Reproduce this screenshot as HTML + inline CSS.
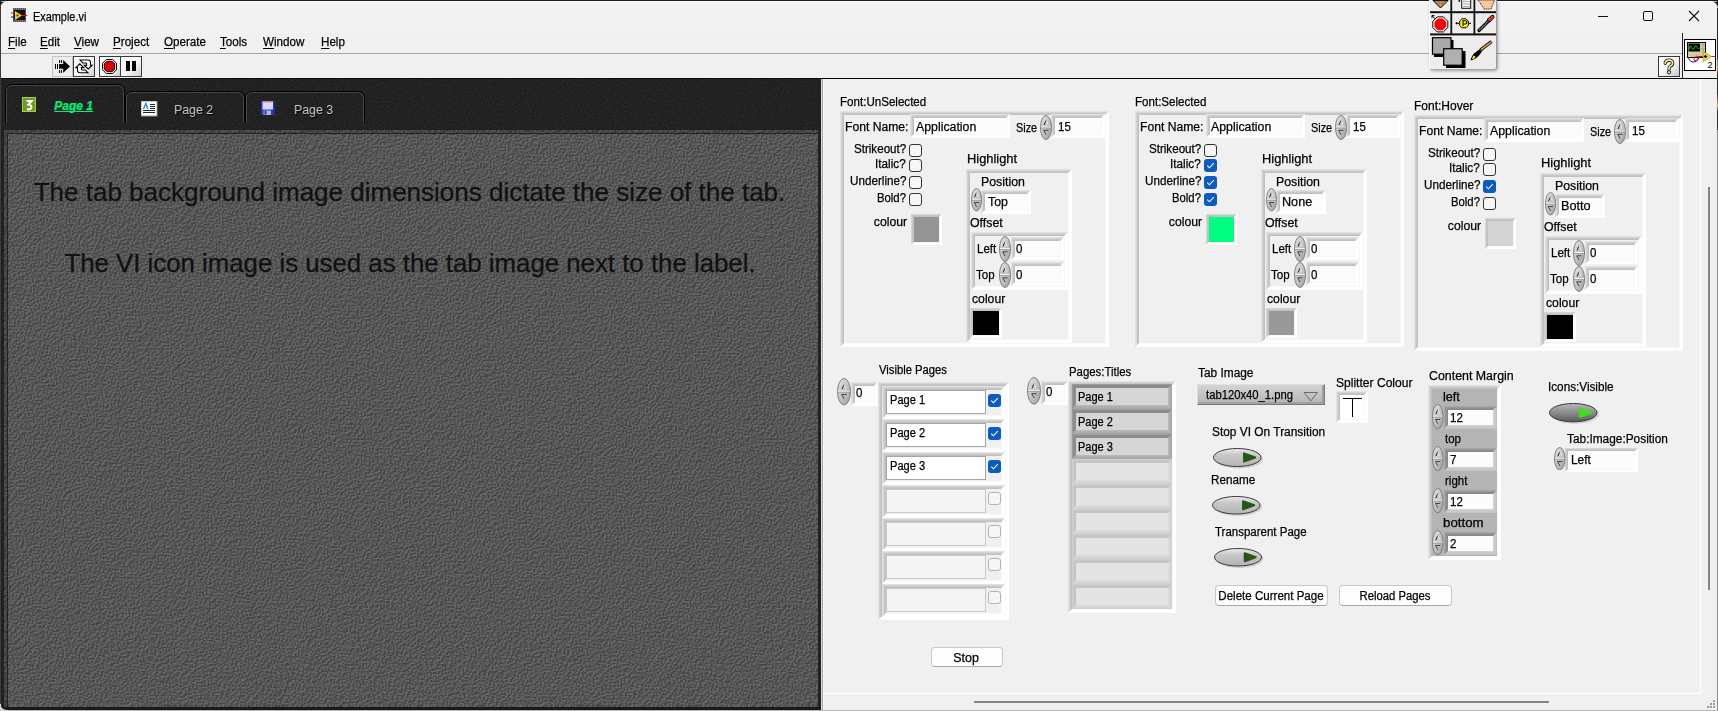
<!DOCTYPE html><html><head><meta charset="utf-8"><style>
html,body{margin:0;padding:0;width:1718px;height:711px;overflow:hidden;background:#1c1c1c;font-family:"Liberation Sans",sans-serif}
.t{position:absolute;white-space:nowrap;line-height:1;font-family:"Liberation Sans",sans-serif;-webkit-text-stroke:0.25px currentColor}
</style></head><body>
<svg width="0" height="0" style="position:absolute">
<defs>
<filter id="nz" x="0" y="0" width="100%" height="100%" color-interpolation-filters="sRGB">
<feTurbulence type="fractalNoise" baseFrequency="0.62" numOctaves="2" seed="7" result="n"/>
<feColorMatrix in="n" type="matrix" values="1 0 0 0 0  1 0 0 0 0  1 0 0 0 0  0 0 0 0 1" result="g"/>
<feConvolveMatrix in="g" order="3" kernelMatrix="2 1 0  1 0 -1  0 -1 -2" divisor="1" bias="0.5" preserveAlpha="true" result="e"/>
<feColorMatrix in="e" type="matrix" values="0.125 0 0 0 0.275  0.125 0 0 0 0.275  0.125 0 0 0 0.275  0 0 0 0 1"/>
</filter>
<filter id="nzd" x="0" y="0" width="100%" height="100%" color-interpolation-filters="sRGB">
<feTurbulence type="fractalNoise" baseFrequency="0.9" numOctaves="2" seed="5"/>
<feColorMatrix type="matrix" values="0.13 0 0 0 0.068  0.13 0 0 0 0.068  0.13 0 0 0 0.068  0 0 0 0 1"/>
</filter>
</defs></svg>

<div style="position:absolute;left:0px;top:1px;width:1718px;height:710px;background:#f0f0f0;border-radius:8px 8px 6px 6px;overflow:hidden"></div>
<div style="position:absolute;left:1px;top:1px;width:1716px;height:32px;background:#f3f3f3;border-radius:8px 8px 0 0"></div>
<div style="position:absolute;left:1px;top:1px;width:1716px;height:1px;background:rgba(255,255,255,0.7);border-radius:8px 8px 0 0"></div>
<div style="position:absolute;left:1px;top:33px;width:1716px;height:20px;background:#f0f0f0"></div>
<div style="position:absolute;left:1px;top:53px;width:1681px;height:1px;background:#a4a4a4"></div>
<div style="position:absolute;left:1px;top:54px;width:1716px;height:24px;background:#f0f0f0"></div>
<div style="position:absolute;left:1682px;top:33px;width:1px;height:45px;background:#222"></div>
<div style="position:absolute;left:1px;top:78px;width:1716px;height:1px;background:#0a0a0a"></div>
<div style="position:absolute;left:0px;top:6px;width:1px;height:698px;background:#3c3c3c"></div>
<svg width="16" height="16" style="position:absolute;left:11px;top:7px" viewBox="0 0 16 16">
<rect x="2" y="1" width="13" height="14" fill="#555"/>
<rect x="3" y="3" width="11" height="10" fill="#111"/>
<g fill="#bbb"><rect x="3" y="1.6" width="1" height="0.8"/><rect x="5" y="1.6" width="1" height="0.8"/><rect x="7" y="1.6" width="1" height="0.8"/><rect x="9" y="1.6" width="1" height="0.8"/><rect x="11" y="1.6" width="1" height="0.8"/><rect x="13" y="1.6" width="1" height="0.8"/>
<rect x="3" y="13.6" width="1" height="0.8"/><rect x="5" y="13.6" width="1" height="0.8"/><rect x="7" y="13.6" width="1" height="0.8"/><rect x="9" y="13.6" width="1" height="0.8"/><rect x="11" y="13.6" width="1" height="0.8"/><rect x="13" y="13.6" width="1" height="0.8"/></g>
<path d="M4 4 L11 8.5 L4 13 Z" fill="#f2d21b"/>
<path d="M0 6 L4 6" stroke="#e00" stroke-width="1"/><path d="M0 10 L4 10" stroke="#00e" stroke-width="1"/><path d="M11 8.5 L16 8.5" stroke="#e00" stroke-width="1"/>
<circle cx="6.5" cy="8.5" r="1" fill="#222"/>
</svg>
<div class="t" style="left:32.70px;top:10.78px;font-size:12.5px;color:#000;transform:scaleX(0.8720);transform-origin:0 0;">Example.vi</div>
<div style="position:absolute;left:1598px;top:16px;width:10px;height:1px;background:#111"></div>
<div style="position:absolute;left:1643px;top:11px;width:8px;height:8px;border:1px solid #111;border-radius:2px"></div>
<svg width="12" height="12" style="position:absolute;left:1688px;top:10px"><path d="M1 1 L11 11 M11 1 L1 11" stroke="#111" stroke-width="1.1"/></svg>
<div class="t" style="left:8.20px;top:35.88px;font-size:12.5px;color:#000;transform:scaleX(0.9300);transform-origin:0 0;"><u style="text-decoration-thickness:1px;text-underline-offset:1.5px">F</u>ile</div>
<div class="t" style="left:40.10px;top:35.88px;font-size:12.5px;color:#000;transform:scaleX(0.9300);transform-origin:0 0;"><u style="text-decoration-thickness:1px;text-underline-offset:1.5px">E</u>dit</div>
<div class="t" style="left:74.00px;top:35.88px;font-size:12.5px;color:#000;transform:scaleX(0.9300);transform-origin:0 0;"><u style="text-decoration-thickness:1px;text-underline-offset:1.5px">V</u>iew</div>
<div class="t" style="left:113.00px;top:35.88px;font-size:12.5px;color:#000;transform:scaleX(0.9300);transform-origin:0 0;"><u style="text-decoration-thickness:1px;text-underline-offset:1.5px">P</u>roject</div>
<div class="t" style="left:164.00px;top:35.88px;font-size:12.5px;color:#000;transform:scaleX(0.9300);transform-origin:0 0;"><u style="text-decoration-thickness:1px;text-underline-offset:1.5px">O</u>perate</div>
<div class="t" style="left:220.30px;top:35.88px;font-size:12.5px;color:#000;transform:scaleX(0.9300);transform-origin:0 0;"><u style="text-decoration-thickness:1px;text-underline-offset:1.5px">T</u>ools</div>
<div class="t" style="left:262.80px;top:35.88px;font-size:12.5px;color:#000;transform:scaleX(0.9300);transform-origin:0 0;"><u style="text-decoration-thickness:1px;text-underline-offset:1.5px">W</u>indow</div>
<div class="t" style="left:321.00px;top:35.88px;font-size:12.5px;color:#000;transform:scaleX(0.9300);transform-origin:0 0;"><u style="text-decoration-thickness:1px;text-underline-offset:1.5px">H</u>elp</div>
<div style="position:absolute;left:52px;top:56px;width:21px;height:21px;background:#ededed;border:1px solid #c4c4c4;box-sizing:border-box"></div>
<svg width="22" height="22" style="position:absolute;left:52px;top:56px" viewBox="52 56 22 22">
<path d="M59.1 64.1 H63.2 V60 L70 66.4 L63.2 72.8 V68.7 H59.1 Z" fill="#000"/>
<path d="M55.5 64 V69 M57.5 64 V69 M59.6 60 V63 M61.6 60 V63 M59.6 70 V73 M61.6 70 V73" stroke="#000" stroke-width="1"/>
</svg>
<div style="position:absolute;left:73px;top:56px;width:22px;height:21px;background:linear-gradient(135deg,#fff 0%,#f6f6f6 55%,#cfcfcf 100%);border:1px solid #3a3a3a;box-sizing:border-box"></div>
<svg width="22" height="22" style="position:absolute;left:73px;top:56px" viewBox="73 56 22 22">
<g id="ua"><path d="M80 60 L88 60 Q90.5 60 90.5 62.5 L90.5 65.2 L92.2 65.2 L88.2 69 L84.2 65.2 L86.6 65.2 L86.6 63.6 Q86.6 62.9 85.9 62.9 L82.9 62.9 Z" fill="#fff" stroke="#000" stroke-width="1.05" stroke-linejoin="miter"/></g>
<g transform="rotate(180 84 66.4)"><path d="M80 60 L88 60 Q90.5 60 90.5 62.5 L90.5 65.2 L92.2 65.2 L88.2 69 L84.2 65.2 L86.6 65.2 L86.6 63.6 Q86.6 62.9 85.9 62.9 L82.9 62.9 Z" fill="#fff" stroke="#000" stroke-width="1.05"/></g>
</svg>
<div style="position:absolute;left:99px;top:56px;width:22px;height:21px;background:linear-gradient(135deg,#fff 0%,#f6f6f6 55%,#cfcfcf 100%);border:1px solid #3a3a3a;box-sizing:border-box"></div>
<svg width="22" height="22" style="position:absolute;left:99px;top:56px" viewBox="99 56 22 22">
<polygon points="106.3,59.5 112.7,59.5 116.5,63.3 116.5,69.7 112.7,73.5 106.3,73.5 102.5,69.7 102.5,63.3" fill="#fff" stroke="#000" stroke-width="1"/>
<polygon points="106.9,61.3 112.1,61.3 114.7,63.9 114.7,69.1 112.1,71.7 106.9,71.7 104.3,69.1 104.3,63.9" fill="#e00000" stroke="#000" stroke-width="1"/>
</svg>
<div style="position:absolute;left:120px;top:56px;width:22px;height:21px;background:linear-gradient(135deg,#fff 0%,#f6f6f6 55%,#cfcfcf 100%);border:1px solid #3a3a3a;box-sizing:border-box"></div>
<div style="position:absolute;left:126px;top:61px;width:4px;height:10px;background:#000"></div>
<div style="position:absolute;left:132px;top:61px;width:4px;height:10px;background:#000"></div>
<div style="position:absolute;left:1658px;top:56px;width:22px;height:21px;background:linear-gradient(135deg,#fff 0%,#f4f4f4 55%,#c4c4c4 100%);border:1px solid #3a3a3a;box-sizing:border-box"></div>
<svg width="22" height="21" style="position:absolute;left:1658px;top:56px" viewBox="0 0 22 21">
<path d="M7.3 7.3 Q7.3 4.2 11 4.2 Q14.6 4.2 14.6 7.2 Q14.6 9.2 12.2 10.2 Q11 10.8 11 13.2" fill="none" stroke="#1a1a1a" stroke-width="3.4" stroke-linecap="round"/>
<path d="M7.3 7.3 Q7.3 4.2 11 4.2 Q14.6 4.2 14.6 7.2 Q14.6 9.2 12.2 10.2 Q11 10.8 11 13.2" fill="none" stroke="#f8f090" stroke-width="1.7" stroke-linecap="round"/>
<circle cx="11" cy="16.2" r="1.7" fill="#f8f090" stroke="#1a1a1a" stroke-width="1"/>
</svg>
<svg width="32" height="32" style="position:absolute;left:1684px;top:39px" viewBox="0 0 32 32">
<rect x="0.5" y="0.5" width="31" height="31" fill="#fff" stroke="#000" stroke-width="1"/>
<rect x="3.5" y="3.5" width="18" height="15" fill="#d4cc9c" stroke="#000" stroke-width="1"/>
<rect x="4.5" y="4.5" width="11.5" height="8" fill="#000"/>
<path d="M5 10.5 Q6.2 4.5 7.6 8.5 Q9 12.5 10.4 8.5 Q11.8 4.5 13.2 8.5 Q14.3 11 15.5 9" fill="none" stroke="#1c1" stroke-width="1"/>
<circle cx="19" cy="6" r="1" fill="none" stroke="#888" stroke-width="0.6"/>
<circle cx="19" cy="10" r="1.2" fill="#e8b070" stroke="#886" stroke-width="0.5"/>
<path d="M4.5 18.5 Q6 23.5 10 23 Q14 22.5 15 18.5" fill="none" stroke="#0010c0" stroke-width="1"/>
<path d="M16 17.8 Q12 16 10 19 Q9 22 12 21.5 Q14 20 15 17.5 L19 17.5" fill="none" stroke="#e00" stroke-width="0.9"/>
<path d="M26 17.5 L31 17.5" stroke="#e00" stroke-width="0.9"/>
<path d="M19.2 12.5 L27.5 17.5 L19.2 22.5 Z" fill="#f2e22a" stroke="#8a8020" stroke-width="0.6"/>
<path d="M21.5 15.7 L23.3 17.5 L21.5 19.3 L19.7 17.5 Z" fill="#000"/>
<text x="23.6" y="28.6" font-family="Liberation Sans" font-size="9" fill="#000">2</text>
</svg>
<div style="position:absolute;left:1429px;top:0px;width:68px;height:69px;background:#ededed;box-shadow:1px 2px 3px rgba(0,0,0,0.35);border-radius:0 0 4px 4px"></div>
<svg width="68" height="70" style="position:absolute;left:1429px;top:0px" viewBox="0 0 68 70">
<rect x="0" y="11.2" width="68" height="2" fill="#111"/>
<rect x="0" y="33.4" width="68" height="2" fill="#111"/>
<rect x="21.4" y="0" width="1.8" height="34" fill="#111"/>
<rect x="44.5" y="0" width="1.8" height="34" fill="#111"/>
<rect x="0" y="0" width="1" height="69" fill="#fff"/>
<rect x="67" y="0" width="1" height="69" fill="#9a9a9a"/>
<path d="M4 0.5 L19 0.5 L11.5 8 Z" fill="#c89060" stroke="#000" stroke-width="1"/>
<path d="M7 0 V3 M10 0 V5 M13 0 V5 M16 0 V3" stroke="#7a5030" stroke-width="0.6"/>
<rect x="32.7" y="-1" width="9" height="9.3" fill="#fff" stroke="#111" stroke-width="1"/>
<path d="M34 1.5 Q36 0.8 38 1.5 T41 1.5 M34 4 Q36 3.3 38 4 T41 4 M34 6.5 Q36 5.8 38 6.5 T41 6.5" fill="none" stroke="#888" stroke-width="0.8"/>
<rect x="29.5" y="0" width="1.6" height="1.8" fill="#111"/>
<path d="M49 0 L53.5 6.5 L55 9 L62 9 L65.5 0 Z" fill="#f8c898" stroke="#222" stroke-width="0.9" stroke-dasharray="1.2 0.6"/>
<polygon points="8.2,16.9 14.4,16.9 18.8,21.3 18.8,27.5 14.4,31.9 8.2,31.9 3.8,27.5 3.8,21.3" fill="#fff" stroke="#000" stroke-width="1"/>
<polygon points="8.8,18.6 13.8,18.6 17.2,22 17.2,26.8 13.8,30.2 8.8,30.2 5.4,26.8 5.4,22" fill="#f00"/>
<path d="M3.2 15.8 L6.4 19" stroke="#000" stroke-width="1"/><path d="M3 15.6 L3 18 M3 15.6 L5.4 15.6" stroke="#000" stroke-width="1"/>
<path d="M27 23.3 H30.5 M39.5 23.3 H42" stroke="#000" stroke-width="1"/>
<path d="M26.2 23.3 L28.2 21.8 L28.2 24.8 Z" fill="#000"/>
<polygon points="33,18.8 37,18.8 39.3,21.1 39.3,25.5 37,27.8 33,27.8 30.7,25.5 30.7,21.1" fill="#ffff00" stroke="#000" stroke-width="1"/>
<path d="M34 26 V20.8 H36.2 Q37.8 20.8 37.8 22.4 Q37.8 24 36.2 24 H34" fill="none" stroke="#000" stroke-width="1.1"/>
<path d="M50 30.5 L59.5 21" stroke="#000" stroke-width="3.2" stroke-linecap="round"/>
<path d="M50.3 30.2 L59.3 21.2" stroke="#8fe0f8" stroke-width="1.2" stroke-dasharray="1.2 0.8"/>
<path d="M58 19.5 L62.5 15.5 Q65.5 14.5 65 17.5 L61 22 Z" fill="#f03030" stroke="#000" stroke-width="0.9"/>
<rect x="5" y="40" width="19.5" height="17" fill="#000"/>
<rect x="3.5" y="37.7" width="18.5" height="16.5" fill="#aaa" stroke="#000" stroke-width="1.2"/>
<rect x="17" y="51" width="19.5" height="17" fill="#000"/>
<rect x="14.7" y="48.7" width="18.5" height="16.5" fill="#b0b0b0" stroke="#000" stroke-width="1.2"/>
<path d="M51.5 50 L62.5 41.5" stroke="#000" stroke-width="3.4"/>
<path d="M52 49.6 L62.2 41.8" stroke="#e0a060" stroke-width="1.6"/>
<path d="M41.5 60.5 Q43 54 47 52 L50.5 49.2 L53 51.5 L50 55.5 Q46.5 59.5 41.5 60.5 Z" fill="#000"/>
<path d="M43 58.8 L44.5 55.5 L46.5 56.5 L45 59 Z" fill="#ff0"/>
</svg>
<div style="position:absolute;left:1px;top:79px;width:820px;height:631px;background:#222"></div>
<svg width="820" height="631" style="position:absolute;left:1px;top:79px"><rect width="820" height="631" filter="url(#nzd)"/></svg>
<div style="position:absolute;left:5px;top:84px;width:120px;height:39px;box-sizing:border-box;border:1px solid #000;border-bottom:none;border-radius:7px 7px 0 0"></div>
<div style="position:absolute;left:6px;top:85px;width:118px;height:38px;box-sizing:border-box;border:1px solid #464646;border-bottom:none;border-radius:6px 6px 0 0"></div>
<div style="position:absolute;left:125px;top:91px;width:120px;height:32px;box-sizing:border-box;border:1px solid #000;border-bottom:none;border-radius:7px 7px 0 0"></div>
<div style="position:absolute;left:126px;top:92px;width:118px;height:31px;box-sizing:border-box;border:1px solid #464646;border-bottom:none;border-radius:6px 6px 0 0"></div>
<div style="position:absolute;left:245px;top:91px;width:120px;height:32px;box-sizing:border-box;border:1px solid #000;border-bottom:none;border-radius:7px 7px 0 0"></div>
<div style="position:absolute;left:246px;top:92px;width:118px;height:31px;box-sizing:border-box;border:1px solid #464646;border-bottom:none;border-radius:6px 6px 0 0"></div>
<svg width="14" height="15" style="position:absolute;left:22px;top:97px" viewBox="0 0 14 15">
<rect x="0.5" y="0.5" width="13" height="14" fill="#6c9a2c" stroke="#a8d038" stroke-width="1"/>
<path d="M4.5 4 H9.5 L6.5 7.5 Q9.8 7.8 9.2 10.8 Q8.5 13 5 12.2" fill="none" stroke="#fff" stroke-width="2.2"/>
</svg>
<div class="t" style="left:54.30px;top:100.20px;font-size:12px;color:#00f07a;transform:scaleX(1.0000);transform-origin:0 0;"><b><i><u style="text-decoration-thickness:1.2px;text-underline-offset:1.2px;text-decoration-skip-ink:none">Page 1</u></i></b></div>
<svg width="17" height="16" style="position:absolute;left:141px;top:101px" viewBox="0 0 17 16">
<rect x="0" y="0" width="16" height="15" fill="#fff"/>
<rect x="0" y="0" width="16" height="15" fill="none" stroke="#9a9a9a" stroke-width="1"/>
<path d="M2.5 8 L4.8 2.5 L7 8" fill="none" stroke="#2a90e0" stroke-width="1.5"/>
<rect x="9" y="3" width="5" height="1" fill="#222"/><rect x="9" y="5" width="5" height="1" fill="#222"/><rect x="9" y="7" width="5" height="1" fill="#222"/>
<rect x="2" y="9" width="12" height="1" fill="#222"/><rect x="2" y="11" width="12" height="1" fill="#222"/>
</svg>
<div class="t" style="left:174.00px;top:104.34px;font-size:12.3px;color:#c4c4c4;transform:scaleX(1.0000);transform-origin:0 0;-webkit-text-stroke:0;text-shadow:1px 1px 1px #000">Page 2</div>
<svg width="14" height="15" style="position:absolute;left:261px;top:100.5px" viewBox="0 0 14 15">
<rect x="0" y="0" width="13.5" height="14" fill="#2432c8"/>
<rect x="1.5" y="0.5" width="10.5" height="8" fill="#d8d8f8"/>
<rect x="1.5" y="0.5" width="10.5" height="1" fill="#f08080"/>
<rect x="2.5" y="9.5" width="7.5" height="4.5" fill="#b8b8c8"/>
<rect x="3.5" y="10" width="2" height="3.5" fill="#2432c8"/>
</svg>
<div class="t" style="left:294.00px;top:104.34px;font-size:12.3px;color:#c4c4c4;transform:scaleX(1.0000);transform-origin:0 0;-webkit-text-stroke:0;text-shadow:1px 1px 1px #000">Page 3</div>
<svg width="814" height="577" style="position:absolute;left:4px;top:130px"><rect width="814" height="577" filter="url(#nz)"/></svg>
<div style="position:absolute;left:4px;top:130px;width:814px;height:3px;background:rgba(0,0,0,0.18)"></div>
<div style="position:absolute;left:4px;top:133px;width:3px;height:574px;background:rgba(0,0,0,0.18)"></div>
<div style="position:absolute;left:7px;top:133px;width:811px;height:1px;background:rgba(0,0,0,0.6)"></div>
<div style="position:absolute;left:7px;top:134px;width:1px;height:573px;background:rgba(0,0,0,0.6)"></div>
<div class="t" style="left:-390.50px;width:1600px;text-align:center;top:179.10px;font-size:26.0px;color:#111;transform:scaleX(1.0000);transform-origin:50% 0;">The tab background image dimensions dictate the size of the tab.</div>
<div class="t" style="left:-390.00px;width:1600px;text-align:center;top:251.17px;font-size:25.8px;color:#111;transform:scaleX(1.0000);transform-origin:50% 0;">The VI icon image is used as the tab image next to the label.</div>
<div style="position:absolute;left:1px;top:707px;width:820px;height:3px;background:#1a1a1a"></div>
<div style="position:absolute;left:821px;top:79px;width:1px;height:631px;background:#d8d8d8"></div>
<div style="position:absolute;left:822px;top:79px;width:1px;height:631px;background:#a8a8a8"></div>
<div style="position:absolute;left:823px;top:79px;width:894px;height:631px;background:#f0f0f0"></div>
<div style="position:absolute;left:823px;top:79px;width:1px;height:631px;background:#f6f6f6"></div>
<div style="position:absolute;left:1700px;top:79px;width:1px;height:614px;background:#fff"></div>
<div style="position:absolute;left:823px;top:693px;width:878px;height:1px;background:#fff"></div>
<div style="position:absolute;left:1708px;top:187px;width:2px;height:403px;background:#858585"></div>
<div style="position:absolute;left:974px;top:701px;width:575px;height:2px;background:#858585"></div>
<div style="position:absolute;left:1713px;top:700px;width:2px;height:2px;background:#9a9a9a"></div>
<div style="position:absolute;left:1710px;top:703px;width:2px;height:2px;background:#9a9a9a"></div>
<div style="position:absolute;left:1713px;top:703px;width:2px;height:2px;background:#9a9a9a"></div>
<div style="position:absolute;left:1707px;top:706px;width:2px;height:2px;background:#9a9a9a"></div>
<div style="position:absolute;left:1710px;top:706px;width:2px;height:2px;background:#9a9a9a"></div>
<div style="position:absolute;left:1713px;top:706px;width:2px;height:2px;background:#9a9a9a"></div>
<div style="position:absolute;left:1717px;top:8px;width:1px;height:703px;background:#8a8a8a"></div>
<div style="position:absolute;left:1717px;top:8px;width:1px;height:122px;background:linear-gradient(#2a2a2a 0%,#2a2a2a 40%,#6a9a5a 45%,#c08030 50%,#2a2a2a 55%,#2a2a2a 70%,#a04040 74%,#c0b040 80%,#2a2a2a 85%,#2a2a2a 100%)"></div>
<div style="position:absolute;left:0px;top:710px;width:1718px;height:1px;background:#b8b8b8"></div>
<svg width="8" height="8" style="position:absolute;left:0;top:703px"><path d="M0 0 V8 H8 V7 A7 7 0 0 1 0 0 Z" fill="#d4d4d4"/></svg>
<div class="t" style="left:840.37px;top:95.97px;font-size:12.5px;color:#000;transform:scaleX(0.9261);transform-origin:0 0;">Font:UnSelected</div>
<div style="position:absolute;left:840px;top:111px"><div style="border:1px solid;border-color:#e2e2e2 #fefefe #fefefe #e2e2e2"><div style="border:1px solid;border-color:#d4d4d4 #ffffff #ffffff #d4d4d4"><div style="border:1px solid;border-color:#c8c8c8 #ffffff #ffffff #c8c8c8"><div style="border:1px solid;border-color:#c0c0c0 #f8f8f8 #f8f8f8 #c0c0c0"><div style="width:261.00px;height:228.00px;background:transparent"></div></div></div></div></div></div>
<div class="t" style="left:844.73px;top:121.18px;font-size:12.5px;color:#000;transform:scaleX(0.9714);transform-origin:0 0;">Font Name:</div>
<div style="position:absolute;left:910px;top:114px"><div style="border:1px solid;border-color:#e2e2e2 #fefefe #fefefe #e2e2e2"><div style="border:1px solid;border-color:#d4d4d4 #ffffff #ffffff #d4d4d4"><div style="border:1px solid;border-color:#c8c8c8 #ffffff #ffffff #c8c8c8"><div style="border:1px solid;border-color:#c0c0c0 #f8f8f8 #f8f8f8 #c0c0c0"><div style="width:92.00px;height:16.00px;background:#fcfcfc"></div></div></div></div></div></div>
<div class="t" style="left:916.40px;top:121.18px;font-size:12.5px;color:#000;transform:scaleX(0.9852);transform-origin:0 0;">Application</div>
<div class="t" style="left:1016.13px;top:121.78px;font-size:12.5px;color:#000;transform:scaleX(0.8696);transform-origin:0 0;">Size</div>
<div style="position:absolute;left:1051px;top:114px"><div style="border:1px solid;border-color:#e2e2e2 #fefefe #fefefe #e2e2e2"><div style="border:1px solid;border-color:#d4d4d4 #ffffff #ffffff #d4d4d4"><div style="border:1px solid;border-color:#c8c8c8 #ffffff #ffffff #c8c8c8"><div style="border:1px solid;border-color:#c0c0c0 #f8f8f8 #f8f8f8 #c0c0c0"><div style="width:46.00px;height:16.00px;background:#fcfcfc"></div></div></div></div></div></div>
<svg width="12" height="25" viewBox="0 0 12 25" style="position:absolute;left:1040px;top:114.5px"><defs><linearGradient id="sg" x1="0" y1="0" x2="1" y2="1"><stop offset="0" stop-color="#e6e6e6"/><stop offset="0.5" stop-color="#c4c4c4"/><stop offset="1" stop-color="#9c9c9c"/></linearGradient></defs><ellipse cx="6.0" cy="12.5" rx="5.5" ry="12.0" fill="url(#sg)" stroke="#777" stroke-width="0.9"/><line x1="1" y1="12.0" x2="11" y2="12.0" stroke="#f2f2f2" stroke-width="1"/><line x1="1" y1="13.1" x2="11" y2="13.1" stroke="#9a9a9a" stroke-width="0.8"/><path d="M4.0 10.0 L6.0 5.5" stroke="#222" stroke-width="1"/><path d="M6.0 5.5 L8.2 10.0" stroke="#eee" stroke-width="0.9"/><path d="M3.5 15.3 H8.5 M3.8 15.5 L6.0 19.5" stroke="#333" stroke-width="0.9" fill="none"/></svg>
<div class="t" style="left:1058.00px;top:121.18px;font-size:12.5px;color:#000;transform:scaleX(0.9200);transform-origin:0 0;">15</div>
<div style="position:absolute;left:909px;top:144.4px;width:10.5px;height:10.5px;border:1px solid #333;border-radius:3px;background:#f6f6f6"></div>
<div class="t" style="right:812.00px;top:142.98px;font-size:12.5px;color:#000;transform:scaleX(0.9309);transform-origin:100% 0;">Strikeout?</div>
<div style="position:absolute;left:909px;top:159.4px;width:10.5px;height:10.5px;border:1px solid #333;border-radius:3px;background:#f6f6f6"></div>
<div class="t" style="right:812.00px;top:157.98px;font-size:12.5px;color:#000;transform:scaleX(0.9387);transform-origin:100% 0;">Italic?</div>
<div style="position:absolute;left:909px;top:176.3px;width:10.5px;height:10.5px;border:1px solid #333;border-radius:3px;background:#f6f6f6"></div>
<div class="t" style="right:812.00px;top:174.88px;font-size:12.5px;color:#000;transform:scaleX(0.9322);transform-origin:100% 0;">Underline?</div>
<div style="position:absolute;left:909px;top:193.4px;width:10.5px;height:10.5px;border:1px solid #333;border-radius:3px;background:#f6f6f6"></div>
<div class="t" style="right:812.00px;top:191.98px;font-size:12.5px;color:#000;transform:scaleX(0.9065);transform-origin:100% 0;">Bold?</div>
<div class="t" style="right:811.00px;top:215.88px;font-size:12.5px;color:#000;transform:scaleX(0.9765);transform-origin:100% 0;">colour</div>
<div style="position:absolute;left:911px;top:214px"><div style="border:1px solid;border-color:#d4d4d4 #ffffff #ffffff #d4d4d4"><div style="border:1px solid;border-color:#c8c8c8 #ffffff #ffffff #c8c8c8"><div style="border:1px solid;border-color:#c0c0c0 #f8f8f8 #f8f8f8 #c0c0c0"><div style="width:25.00px;height:25.00px;background:#949494"></div></div></div></div></div>
<div class="t" style="left:966.57px;top:152.98px;font-size:12.5px;color:#000;transform:scaleX(1.0292);transform-origin:0 0;">Highlight</div>
<div style="position:absolute;left:966px;top:169px"><div style="border:1px solid;border-color:#e2e2e2 #fefefe #fefefe #e2e2e2"><div style="border:1px solid;border-color:#d4d4d4 #ffffff #ffffff #d4d4d4"><div style="border:1px solid;border-color:#c8c8c8 #ffffff #ffffff #c8c8c8"><div style="border:1px solid;border-color:#c0c0c0 #f8f8f8 #f8f8f8 #c0c0c0"><div style="width:98.00px;height:166.00px;background:transparent"></div></div></div></div></div></div>
<div class="t" style="left:981.21px;top:176.08px;font-size:12.5px;color:#000;transform:scaleX(0.9860);transform-origin:0 0;">Position</div>
<div style="position:absolute;left:981px;top:190px"><div style="border:1px solid;border-color:#e2e2e2 #fefefe #fefefe #e2e2e2"><div style="border:1px solid;border-color:#d4d4d4 #ffffff #ffffff #d4d4d4"><div style="border:1px solid;border-color:#c8c8c8 #ffffff #ffffff #c8c8c8"><div style="border:1px solid;border-color:#c0c0c0 #f8f8f8 #f8f8f8 #c0c0c0"><div style="width:42.00px;height:16.00px;background:#fcfcfc"></div></div></div></div></div></div>
<svg width="11" height="23.5" viewBox="0 0 11 23.5" style="position:absolute;left:970.8px;top:188.4px"><defs><linearGradient id="sg" x1="0" y1="0" x2="1" y2="1"><stop offset="0" stop-color="#e6e6e6"/><stop offset="0.5" stop-color="#c4c4c4"/><stop offset="1" stop-color="#9c9c9c"/></linearGradient></defs><ellipse cx="5.5" cy="11.75" rx="5.0" ry="11.25" fill="url(#sg)" stroke="#777" stroke-width="0.9"/><line x1="1" y1="11.25" x2="10" y2="11.25" stroke="#f2f2f2" stroke-width="1"/><line x1="1" y1="12.35" x2="10" y2="12.35" stroke="#9a9a9a" stroke-width="0.8"/><path d="M3.5 9.25 L5.5 4.75" stroke="#222" stroke-width="1"/><path d="M5.5 4.75 L7.7 9.25" stroke="#eee" stroke-width="0.9"/><path d="M3.0 14.55 H8.0 M3.3 14.75 L5.5 18.75" stroke="#333" stroke-width="0.9" fill="none"/></svg>
<div class="t" style="left:987.80px;top:196.18px;font-size:12.5px;color:#000;transform:scaleX(0.9850);transform-origin:0 0;">Top</div>
<div class="t" style="left:970.41px;top:216.98px;font-size:12.5px;color:#000;transform:scaleX(0.9875);transform-origin:0 0;">Offset</div>
<div style="position:absolute;left:971px;top:232px"><div style="border:1px solid;border-color:#e2e2e2 #fefefe #fefefe #e2e2e2"><div style="border:1px solid;border-color:#d4d4d4 #ffffff #ffffff #d4d4d4"><div style="border:1px solid;border-color:#c8c8c8 #ffffff #ffffff #c8c8c8"><div style="border:1px solid;border-color:#c0c0c0 #f8f8f8 #f8f8f8 #c0c0c0"><div style="width:89.00px;height:50.00px;background:transparent"></div></div></div></div></div></div>
<div class="t" style="left:976.50px;top:242.98px;font-size:12.5px;color:#000;transform:scaleX(0.9200);transform-origin:0 0;">Left</div>
<div style="position:absolute;left:1011px;top:237px"><div style="border:1px solid;border-color:#e2e2e2 #fefefe #fefefe #e2e2e2"><div style="border:1px solid;border-color:#d4d4d4 #ffffff #ffffff #d4d4d4"><div style="border:1px solid;border-color:#c8c8c8 #ffffff #ffffff #c8c8c8"><div style="border:1px solid;border-color:#c0c0c0 #f8f8f8 #f8f8f8 #c0c0c0"><div style="width:45.00px;height:15.00px;background:#fcfcfc"></div></div></div></div></div></div>
<svg width="12" height="26" viewBox="0 0 12 26" style="position:absolute;left:998.8px;top:236px"><defs><linearGradient id="sg" x1="0" y1="0" x2="1" y2="1"><stop offset="0" stop-color="#e6e6e6"/><stop offset="0.5" stop-color="#c4c4c4"/><stop offset="1" stop-color="#9c9c9c"/></linearGradient></defs><ellipse cx="6.0" cy="13.0" rx="5.5" ry="12.5" fill="url(#sg)" stroke="#777" stroke-width="0.9"/><line x1="1" y1="12.5" x2="11" y2="12.5" stroke="#f2f2f2" stroke-width="1"/><line x1="1" y1="13.6" x2="11" y2="13.6" stroke="#9a9a9a" stroke-width="0.8"/><path d="M4.0 10.5 L6.0 6.0" stroke="#222" stroke-width="1"/><path d="M6.0 6.0 L8.2 10.5" stroke="#eee" stroke-width="0.9"/><path d="M3.5 15.8 H8.5 M3.8 16.0 L6.0 20.0" stroke="#333" stroke-width="0.9" fill="none"/></svg>
<div class="t" style="left:1015.70px;top:242.98px;font-size:12.5px;color:#000;transform:scaleX(0.9200);transform-origin:0 0;">0</div>
<div class="t" style="left:976.00px;top:269.18px;font-size:12.5px;color:#000;transform:scaleX(0.9200);transform-origin:0 0;">Top</div>
<div style="position:absolute;left:1011px;top:262px"><div style="border:1px solid;border-color:#e2e2e2 #fefefe #fefefe #e2e2e2"><div style="border:1px solid;border-color:#d4d4d4 #ffffff #ffffff #d4d4d4"><div style="border:1px solid;border-color:#c8c8c8 #ffffff #ffffff #c8c8c8"><div style="border:1px solid;border-color:#c0c0c0 #f8f8f8 #f8f8f8 #c0c0c0"><div style="width:45.00px;height:16.00px;background:#fcfcfc"></div></div></div></div></div></div>
<svg width="12" height="26" viewBox="0 0 12 26" style="position:absolute;left:998.8px;top:262px"><defs><linearGradient id="sg" x1="0" y1="0" x2="1" y2="1"><stop offset="0" stop-color="#e6e6e6"/><stop offset="0.5" stop-color="#c4c4c4"/><stop offset="1" stop-color="#9c9c9c"/></linearGradient></defs><ellipse cx="6.0" cy="13.0" rx="5.5" ry="12.5" fill="url(#sg)" stroke="#777" stroke-width="0.9"/><line x1="1" y1="12.5" x2="11" y2="12.5" stroke="#f2f2f2" stroke-width="1"/><line x1="1" y1="13.6" x2="11" y2="13.6" stroke="#9a9a9a" stroke-width="0.8"/><path d="M4.0 10.5 L6.0 6.0" stroke="#222" stroke-width="1"/><path d="M6.0 6.0 L8.2 10.5" stroke="#eee" stroke-width="0.9"/><path d="M3.5 15.8 H8.5 M3.8 16.0 L6.0 20.0" stroke="#333" stroke-width="0.9" fill="none"/></svg>
<div class="t" style="left:1015.70px;top:269.18px;font-size:12.5px;color:#000;transform:scaleX(0.9200);transform-origin:0 0;">0</div>
<div class="t" style="left:971.50px;top:292.78px;font-size:12.5px;color:#000;transform:scaleX(0.9765);transform-origin:0 0;">colour</div>
<div style="position:absolute;left:970px;top:308px"><div style="border:1px solid;border-color:#d4d4d4 #ffffff #ffffff #d4d4d4"><div style="border:1px solid;border-color:#c8c8c8 #ffffff #ffffff #c8c8c8"><div style="border:1px solid;border-color:#c0c0c0 #f8f8f8 #f8f8f8 #c0c0c0"><div style="width:26.00px;height:24.00px;background:#000"></div></div></div></div></div>
<div class="t" style="left:1135.38px;top:95.97px;font-size:12.5px;color:#000;transform:scaleX(0.9250);transform-origin:0 0;">Font:Selected</div>
<div style="position:absolute;left:1135px;top:111px"><div style="border:1px solid;border-color:#e2e2e2 #fefefe #fefefe #e2e2e2"><div style="border:1px solid;border-color:#d4d4d4 #ffffff #ffffff #d4d4d4"><div style="border:1px solid;border-color:#c8c8c8 #ffffff #ffffff #c8c8c8"><div style="border:1px solid;border-color:#c0c0c0 #f8f8f8 #f8f8f8 #c0c0c0"><div style="width:261.00px;height:228.00px;background:transparent"></div></div></div></div></div></div>
<div class="t" style="left:1139.73px;top:121.18px;font-size:12.5px;color:#000;transform:scaleX(0.9714);transform-origin:0 0;">Font Name:</div>
<div style="position:absolute;left:1206px;top:114px"><div style="border:1px solid;border-color:#e2e2e2 #fefefe #fefefe #e2e2e2"><div style="border:1px solid;border-color:#d4d4d4 #ffffff #ffffff #d4d4d4"><div style="border:1px solid;border-color:#c8c8c8 #ffffff #ffffff #c8c8c8"><div style="border:1px solid;border-color:#c0c0c0 #f8f8f8 #f8f8f8 #c0c0c0"><div style="width:91.00px;height:16.00px;background:#fcfcfc"></div></div></div></div></div></div>
<div class="t" style="left:1211.40px;top:121.18px;font-size:12.5px;color:#000;transform:scaleX(0.9852);transform-origin:0 0;">Application</div>
<div class="t" style="left:1311.13px;top:121.78px;font-size:12.5px;color:#000;transform:scaleX(0.8696);transform-origin:0 0;">Size</div>
<div style="position:absolute;left:1346px;top:114px"><div style="border:1px solid;border-color:#e2e2e2 #fefefe #fefefe #e2e2e2"><div style="border:1px solid;border-color:#d4d4d4 #ffffff #ffffff #d4d4d4"><div style="border:1px solid;border-color:#c8c8c8 #ffffff #ffffff #c8c8c8"><div style="border:1px solid;border-color:#c0c0c0 #f8f8f8 #f8f8f8 #c0c0c0"><div style="width:46.00px;height:16.00px;background:#fcfcfc"></div></div></div></div></div></div>
<svg width="12" height="25" viewBox="0 0 12 25" style="position:absolute;left:1335px;top:114.5px"><defs><linearGradient id="sg" x1="0" y1="0" x2="1" y2="1"><stop offset="0" stop-color="#e6e6e6"/><stop offset="0.5" stop-color="#c4c4c4"/><stop offset="1" stop-color="#9c9c9c"/></linearGradient></defs><ellipse cx="6.0" cy="12.5" rx="5.5" ry="12.0" fill="url(#sg)" stroke="#777" stroke-width="0.9"/><line x1="1" y1="12.0" x2="11" y2="12.0" stroke="#f2f2f2" stroke-width="1"/><line x1="1" y1="13.1" x2="11" y2="13.1" stroke="#9a9a9a" stroke-width="0.8"/><path d="M4.0 10.0 L6.0 5.5" stroke="#222" stroke-width="1"/><path d="M6.0 5.5 L8.2 10.0" stroke="#eee" stroke-width="0.9"/><path d="M3.5 15.3 H8.5 M3.8 15.5 L6.0 19.5" stroke="#333" stroke-width="0.9" fill="none"/></svg>
<div class="t" style="left:1353.00px;top:121.18px;font-size:12.5px;color:#000;transform:scaleX(0.9200);transform-origin:0 0;">15</div>
<div style="position:absolute;left:1204px;top:144.4px;width:10.5px;height:10.5px;border:1px solid #333;border-radius:3px;background:#f6f6f6"></div>
<div class="t" style="right:517.00px;top:142.98px;font-size:12.5px;color:#000;transform:scaleX(0.9309);transform-origin:100% 0;">Strikeout?</div>
<div style="position:absolute;left:1204px;top:159.4px;width:12.5px;height:12.5px;background:#0a5bc4;border-radius:3px;"><svg width="13" height="13" viewBox="0 0 13 13" style="position:absolute;left:0;top:0"><path d="M3.3 6.7 L5.4 8.8 L9.8 4.2" fill="none" stroke="#fff" stroke-width="1.1"/></svg></div>
<div class="t" style="right:517.00px;top:157.98px;font-size:12.5px;color:#000;transform:scaleX(0.9387);transform-origin:100% 0;">Italic?</div>
<div style="position:absolute;left:1204px;top:176.3px;width:12.5px;height:12.5px;background:#0a5bc4;border-radius:3px;"><svg width="13" height="13" viewBox="0 0 13 13" style="position:absolute;left:0;top:0"><path d="M3.3 6.7 L5.4 8.8 L9.8 4.2" fill="none" stroke="#fff" stroke-width="1.1"/></svg></div>
<div class="t" style="right:517.00px;top:174.88px;font-size:12.5px;color:#000;transform:scaleX(0.9322);transform-origin:100% 0;">Underline?</div>
<div style="position:absolute;left:1204px;top:193.4px;width:12.5px;height:12.5px;background:#0a5bc4;border-radius:3px;"><svg width="13" height="13" viewBox="0 0 13 13" style="position:absolute;left:0;top:0"><path d="M3.3 6.7 L5.4 8.8 L9.8 4.2" fill="none" stroke="#fff" stroke-width="1.1"/></svg></div>
<div class="t" style="right:517.00px;top:191.98px;font-size:12.5px;color:#000;transform:scaleX(0.9065);transform-origin:100% 0;">Bold?</div>
<div class="t" style="right:516.00px;top:215.88px;font-size:12.5px;color:#000;transform:scaleX(0.9765);transform-origin:100% 0;">colour</div>
<div style="position:absolute;left:1206px;top:214px"><div style="border:1px solid;border-color:#d4d4d4 #ffffff #ffffff #d4d4d4"><div style="border:1px solid;border-color:#c8c8c8 #ffffff #ffffff #c8c8c8"><div style="border:1px solid;border-color:#c0c0c0 #f8f8f8 #f8f8f8 #c0c0c0"><div style="width:25.00px;height:25.00px;background:#00ff80"></div></div></div></div></div>
<div class="t" style="left:1261.57px;top:152.98px;font-size:12.5px;color:#000;transform:scaleX(1.0292);transform-origin:0 0;">Highlight</div>
<div style="position:absolute;left:1261px;top:169px"><div style="border:1px solid;border-color:#e2e2e2 #fefefe #fefefe #e2e2e2"><div style="border:1px solid;border-color:#d4d4d4 #ffffff #ffffff #d4d4d4"><div style="border:1px solid;border-color:#c8c8c8 #ffffff #ffffff #c8c8c8"><div style="border:1px solid;border-color:#c0c0c0 #f8f8f8 #f8f8f8 #c0c0c0"><div style="width:98.00px;height:166.00px;background:transparent"></div></div></div></div></div></div>
<div class="t" style="left:1276.21px;top:176.08px;font-size:12.5px;color:#000;transform:scaleX(0.9860);transform-origin:0 0;">Position</div>
<div style="position:absolute;left:1276px;top:190px"><div style="border:1px solid;border-color:#e2e2e2 #fefefe #fefefe #e2e2e2"><div style="border:1px solid;border-color:#d4d4d4 #ffffff #ffffff #d4d4d4"><div style="border:1px solid;border-color:#c8c8c8 #ffffff #ffffff #c8c8c8"><div style="border:1px solid;border-color:#c0c0c0 #f8f8f8 #f8f8f8 #c0c0c0"><div style="width:42.00px;height:16.00px;background:#fcfcfc"></div></div></div></div></div></div>
<svg width="11" height="23.5" viewBox="0 0 11 23.5" style="position:absolute;left:1265.8px;top:188.4px"><defs><linearGradient id="sg" x1="0" y1="0" x2="1" y2="1"><stop offset="0" stop-color="#e6e6e6"/><stop offset="0.5" stop-color="#c4c4c4"/><stop offset="1" stop-color="#9c9c9c"/></linearGradient></defs><ellipse cx="5.5" cy="11.75" rx="5.0" ry="11.25" fill="url(#sg)" stroke="#777" stroke-width="0.9"/><line x1="1" y1="11.25" x2="10" y2="11.25" stroke="#f2f2f2" stroke-width="1"/><line x1="1" y1="12.35" x2="10" y2="12.35" stroke="#9a9a9a" stroke-width="0.8"/><path d="M3.5 9.25 L5.5 4.75" stroke="#222" stroke-width="1"/><path d="M5.5 4.75 L7.7 9.25" stroke="#eee" stroke-width="0.9"/><path d="M3.0 14.55 H8.0 M3.3 14.75 L5.5 18.75" stroke="#333" stroke-width="0.9" fill="none"/></svg>
<div class="t" style="left:1281.79px;top:196.18px;font-size:12.5px;color:#000;transform:scaleX(1.0103);transform-origin:0 0;">None</div>
<div class="t" style="left:1265.41px;top:216.98px;font-size:12.5px;color:#000;transform:scaleX(0.9875);transform-origin:0 0;">Offset</div>
<div style="position:absolute;left:1266px;top:232px"><div style="border:1px solid;border-color:#e2e2e2 #fefefe #fefefe #e2e2e2"><div style="border:1px solid;border-color:#d4d4d4 #ffffff #ffffff #d4d4d4"><div style="border:1px solid;border-color:#c8c8c8 #ffffff #ffffff #c8c8c8"><div style="border:1px solid;border-color:#c0c0c0 #f8f8f8 #f8f8f8 #c0c0c0"><div style="width:89.00px;height:50.00px;background:transparent"></div></div></div></div></div></div>
<div class="t" style="left:1271.50px;top:242.98px;font-size:12.5px;color:#000;transform:scaleX(0.9200);transform-origin:0 0;">Left</div>
<div style="position:absolute;left:1306px;top:237px"><div style="border:1px solid;border-color:#e2e2e2 #fefefe #fefefe #e2e2e2"><div style="border:1px solid;border-color:#d4d4d4 #ffffff #ffffff #d4d4d4"><div style="border:1px solid;border-color:#c8c8c8 #ffffff #ffffff #c8c8c8"><div style="border:1px solid;border-color:#c0c0c0 #f8f8f8 #f8f8f8 #c0c0c0"><div style="width:45.00px;height:15.00px;background:#fcfcfc"></div></div></div></div></div></div>
<svg width="12" height="26" viewBox="0 0 12 26" style="position:absolute;left:1293.8px;top:236px"><defs><linearGradient id="sg" x1="0" y1="0" x2="1" y2="1"><stop offset="0" stop-color="#e6e6e6"/><stop offset="0.5" stop-color="#c4c4c4"/><stop offset="1" stop-color="#9c9c9c"/></linearGradient></defs><ellipse cx="6.0" cy="13.0" rx="5.5" ry="12.5" fill="url(#sg)" stroke="#777" stroke-width="0.9"/><line x1="1" y1="12.5" x2="11" y2="12.5" stroke="#f2f2f2" stroke-width="1"/><line x1="1" y1="13.6" x2="11" y2="13.6" stroke="#9a9a9a" stroke-width="0.8"/><path d="M4.0 10.5 L6.0 6.0" stroke="#222" stroke-width="1"/><path d="M6.0 6.0 L8.2 10.5" stroke="#eee" stroke-width="0.9"/><path d="M3.5 15.8 H8.5 M3.8 16.0 L6.0 20.0" stroke="#333" stroke-width="0.9" fill="none"/></svg>
<div class="t" style="left:1310.70px;top:242.98px;font-size:12.5px;color:#000;transform:scaleX(0.9200);transform-origin:0 0;">0</div>
<div class="t" style="left:1271.00px;top:269.18px;font-size:12.5px;color:#000;transform:scaleX(0.9200);transform-origin:0 0;">Top</div>
<div style="position:absolute;left:1306px;top:262px"><div style="border:1px solid;border-color:#e2e2e2 #fefefe #fefefe #e2e2e2"><div style="border:1px solid;border-color:#d4d4d4 #ffffff #ffffff #d4d4d4"><div style="border:1px solid;border-color:#c8c8c8 #ffffff #ffffff #c8c8c8"><div style="border:1px solid;border-color:#c0c0c0 #f8f8f8 #f8f8f8 #c0c0c0"><div style="width:45.00px;height:16.00px;background:#fcfcfc"></div></div></div></div></div></div>
<svg width="12" height="26" viewBox="0 0 12 26" style="position:absolute;left:1293.8px;top:262px"><defs><linearGradient id="sg" x1="0" y1="0" x2="1" y2="1"><stop offset="0" stop-color="#e6e6e6"/><stop offset="0.5" stop-color="#c4c4c4"/><stop offset="1" stop-color="#9c9c9c"/></linearGradient></defs><ellipse cx="6.0" cy="13.0" rx="5.5" ry="12.5" fill="url(#sg)" stroke="#777" stroke-width="0.9"/><line x1="1" y1="12.5" x2="11" y2="12.5" stroke="#f2f2f2" stroke-width="1"/><line x1="1" y1="13.6" x2="11" y2="13.6" stroke="#9a9a9a" stroke-width="0.8"/><path d="M4.0 10.5 L6.0 6.0" stroke="#222" stroke-width="1"/><path d="M6.0 6.0 L8.2 10.5" stroke="#eee" stroke-width="0.9"/><path d="M3.5 15.8 H8.5 M3.8 16.0 L6.0 20.0" stroke="#333" stroke-width="0.9" fill="none"/></svg>
<div class="t" style="left:1310.70px;top:269.18px;font-size:12.5px;color:#000;transform:scaleX(0.9200);transform-origin:0 0;">0</div>
<div class="t" style="left:1266.50px;top:292.78px;font-size:12.5px;color:#000;transform:scaleX(0.9765);transform-origin:0 0;">colour</div>
<div style="position:absolute;left:1266px;top:308px"><div style="border:1px solid;border-color:#d4d4d4 #ffffff #ffffff #d4d4d4"><div style="border:1px solid;border-color:#c8c8c8 #ffffff #ffffff #c8c8c8"><div style="border:1px solid;border-color:#c0c0c0 #f8f8f8 #f8f8f8 #c0c0c0"><div style="width:25.00px;height:24.00px;background:#999"></div></div></div></div></div>
<div class="t" style="left:1414.34px;top:99.97px;font-size:12.5px;color:#000;transform:scaleX(0.9590);transform-origin:0 0;">Font:Hover</div>
<div style="position:absolute;left:1414px;top:115px"><div style="border:1px solid;border-color:#e2e2e2 #fefefe #fefefe #e2e2e2"><div style="border:1px solid;border-color:#d4d4d4 #ffffff #ffffff #d4d4d4"><div style="border:1px solid;border-color:#c8c8c8 #ffffff #ffffff #c8c8c8"><div style="border:1px solid;border-color:#c0c0c0 #f8f8f8 #f8f8f8 #c0c0c0"><div style="width:261.00px;height:228.00px;background:transparent"></div></div></div></div></div></div>
<div class="t" style="left:1418.73px;top:125.18px;font-size:12.5px;color:#000;transform:scaleX(0.9714);transform-origin:0 0;">Font Name:</div>
<div style="position:absolute;left:1484px;top:118px"><div style="border:1px solid;border-color:#e2e2e2 #fefefe #fefefe #e2e2e2"><div style="border:1px solid;border-color:#d4d4d4 #ffffff #ffffff #d4d4d4"><div style="border:1px solid;border-color:#c8c8c8 #ffffff #ffffff #c8c8c8"><div style="border:1px solid;border-color:#c0c0c0 #f8f8f8 #f8f8f8 #c0c0c0"><div style="width:92.00px;height:16.00px;background:#fcfcfc"></div></div></div></div></div></div>
<div class="t" style="left:1490.40px;top:125.18px;font-size:12.5px;color:#000;transform:scaleX(0.9852);transform-origin:0 0;">Application</div>
<div class="t" style="left:1590.13px;top:125.78px;font-size:12.5px;color:#000;transform:scaleX(0.8696);transform-origin:0 0;">Size</div>
<div style="position:absolute;left:1625px;top:118px"><div style="border:1px solid;border-color:#e2e2e2 #fefefe #fefefe #e2e2e2"><div style="border:1px solid;border-color:#d4d4d4 #ffffff #ffffff #d4d4d4"><div style="border:1px solid;border-color:#c8c8c8 #ffffff #ffffff #c8c8c8"><div style="border:1px solid;border-color:#c0c0c0 #f8f8f8 #f8f8f8 #c0c0c0"><div style="width:46.00px;height:16.00px;background:#fcfcfc"></div></div></div></div></div></div>
<svg width="12" height="25" viewBox="0 0 12 25" style="position:absolute;left:1614px;top:118.5px"><defs><linearGradient id="sg" x1="0" y1="0" x2="1" y2="1"><stop offset="0" stop-color="#e6e6e6"/><stop offset="0.5" stop-color="#c4c4c4"/><stop offset="1" stop-color="#9c9c9c"/></linearGradient></defs><ellipse cx="6.0" cy="12.5" rx="5.5" ry="12.0" fill="url(#sg)" stroke="#777" stroke-width="0.9"/><line x1="1" y1="12.0" x2="11" y2="12.0" stroke="#f2f2f2" stroke-width="1"/><line x1="1" y1="13.1" x2="11" y2="13.1" stroke="#9a9a9a" stroke-width="0.8"/><path d="M4.0 10.0 L6.0 5.5" stroke="#222" stroke-width="1"/><path d="M6.0 5.5 L8.2 10.0" stroke="#eee" stroke-width="0.9"/><path d="M3.5 15.3 H8.5 M3.8 15.5 L6.0 19.5" stroke="#333" stroke-width="0.9" fill="none"/></svg>
<div class="t" style="left:1632.00px;top:125.18px;font-size:12.5px;color:#000;transform:scaleX(0.9200);transform-origin:0 0;">15</div>
<div style="position:absolute;left:1483px;top:148.4px;width:10.5px;height:10.5px;border:1px solid #333;border-radius:3px;background:#f6f6f6"></div>
<div class="t" style="right:238.00px;top:146.98px;font-size:12.5px;color:#000;transform:scaleX(0.9309);transform-origin:100% 0;">Strikeout?</div>
<div style="position:absolute;left:1483px;top:163.4px;width:10.5px;height:10.5px;border:1px solid #333;border-radius:3px;background:#f6f6f6"></div>
<div class="t" style="right:238.00px;top:161.98px;font-size:12.5px;color:#000;transform:scaleX(0.9387);transform-origin:100% 0;">Italic?</div>
<div style="position:absolute;left:1483px;top:180.3px;width:12.5px;height:12.5px;background:#0a5bc4;border-radius:3px;"><svg width="13" height="13" viewBox="0 0 13 13" style="position:absolute;left:0;top:0"><path d="M3.3 6.7 L5.4 8.8 L9.8 4.2" fill="none" stroke="#fff" stroke-width="1.1"/></svg></div>
<div class="t" style="right:238.00px;top:178.88px;font-size:12.5px;color:#000;transform:scaleX(0.9322);transform-origin:100% 0;">Underline?</div>
<div style="position:absolute;left:1483px;top:197.4px;width:10.5px;height:10.5px;border:1px solid #333;border-radius:3px;background:#f6f6f6"></div>
<div class="t" style="right:238.00px;top:195.98px;font-size:12.5px;color:#000;transform:scaleX(0.9065);transform-origin:100% 0;">Bold?</div>
<div class="t" style="right:237.00px;top:219.88px;font-size:12.5px;color:#000;transform:scaleX(0.9765);transform-origin:100% 0;">colour</div>
<div style="position:absolute;left:1485px;top:218px"><div style="border:1px solid;border-color:#d4d4d4 #ffffff #ffffff #d4d4d4"><div style="border:1px solid;border-color:#c8c8c8 #ffffff #ffffff #c8c8c8"><div style="border:1px solid;border-color:#c0c0c0 #f8f8f8 #f8f8f8 #c0c0c0"><div style="width:25.00px;height:25.00px;background:#d4d4d4"></div></div></div></div></div>
<div class="t" style="left:1540.57px;top:156.98px;font-size:12.5px;color:#000;transform:scaleX(1.0292);transform-origin:0 0;">Highlight</div>
<div style="position:absolute;left:1540px;top:173px"><div style="border:1px solid;border-color:#e2e2e2 #fefefe #fefefe #e2e2e2"><div style="border:1px solid;border-color:#d4d4d4 #ffffff #ffffff #d4d4d4"><div style="border:1px solid;border-color:#c8c8c8 #ffffff #ffffff #c8c8c8"><div style="border:1px solid;border-color:#c0c0c0 #f8f8f8 #f8f8f8 #c0c0c0"><div style="width:98.00px;height:166.00px;background:transparent"></div></div></div></div></div></div>
<div class="t" style="left:1555.21px;top:180.08px;font-size:12.5px;color:#000;transform:scaleX(0.9860);transform-origin:0 0;">Position</div>
<div style="position:absolute;left:1555px;top:194px"><div style="border:1px solid;border-color:#e2e2e2 #fefefe #fefefe #e2e2e2"><div style="border:1px solid;border-color:#d4d4d4 #ffffff #ffffff #d4d4d4"><div style="border:1px solid;border-color:#c8c8c8 #ffffff #ffffff #c8c8c8"><div style="border:1px solid;border-color:#c0c0c0 #f8f8f8 #f8f8f8 #c0c0c0"><div style="width:42.00px;height:16.00px;background:#fcfcfc"></div></div></div></div></div></div>
<svg width="11" height="23.5" viewBox="0 0 11 23.5" style="position:absolute;left:1544.8px;top:192.4px"><defs><linearGradient id="sg" x1="0" y1="0" x2="1" y2="1"><stop offset="0" stop-color="#e6e6e6"/><stop offset="0.5" stop-color="#c4c4c4"/><stop offset="1" stop-color="#9c9c9c"/></linearGradient></defs><ellipse cx="5.5" cy="11.75" rx="5.0" ry="11.25" fill="url(#sg)" stroke="#777" stroke-width="0.9"/><line x1="1" y1="11.25" x2="10" y2="11.25" stroke="#f2f2f2" stroke-width="1"/><line x1="1" y1="12.35" x2="10" y2="12.35" stroke="#9a9a9a" stroke-width="0.8"/><path d="M3.5 9.25 L5.5 4.75" stroke="#222" stroke-width="1"/><path d="M5.5 4.75 L7.7 9.25" stroke="#eee" stroke-width="0.9"/><path d="M3.0 14.55 H8.0 M3.3 14.75 L5.5 18.75" stroke="#333" stroke-width="0.9" fill="none"/></svg>
<div class="t" style="left:1560.79px;top:200.18px;font-size:12.5px;color:#000;transform:scaleX(1.0143);transform-origin:0 0;">Botto</div>
<div class="t" style="left:1544.41px;top:220.98px;font-size:12.5px;color:#000;transform:scaleX(0.9875);transform-origin:0 0;">Offset</div>
<div style="position:absolute;left:1545px;top:236px"><div style="border:1px solid;border-color:#e2e2e2 #fefefe #fefefe #e2e2e2"><div style="border:1px solid;border-color:#d4d4d4 #ffffff #ffffff #d4d4d4"><div style="border:1px solid;border-color:#c8c8c8 #ffffff #ffffff #c8c8c8"><div style="border:1px solid;border-color:#c0c0c0 #f8f8f8 #f8f8f8 #c0c0c0"><div style="width:89.00px;height:50.00px;background:transparent"></div></div></div></div></div></div>
<div class="t" style="left:1550.50px;top:246.98px;font-size:12.5px;color:#000;transform:scaleX(0.9200);transform-origin:0 0;">Left</div>
<div style="position:absolute;left:1585px;top:241px"><div style="border:1px solid;border-color:#e2e2e2 #fefefe #fefefe #e2e2e2"><div style="border:1px solid;border-color:#d4d4d4 #ffffff #ffffff #d4d4d4"><div style="border:1px solid;border-color:#c8c8c8 #ffffff #ffffff #c8c8c8"><div style="border:1px solid;border-color:#c0c0c0 #f8f8f8 #f8f8f8 #c0c0c0"><div style="width:45.00px;height:15.00px;background:#fcfcfc"></div></div></div></div></div></div>
<svg width="12" height="26" viewBox="0 0 12 26" style="position:absolute;left:1572.8px;top:240px"><defs><linearGradient id="sg" x1="0" y1="0" x2="1" y2="1"><stop offset="0" stop-color="#e6e6e6"/><stop offset="0.5" stop-color="#c4c4c4"/><stop offset="1" stop-color="#9c9c9c"/></linearGradient></defs><ellipse cx="6.0" cy="13.0" rx="5.5" ry="12.5" fill="url(#sg)" stroke="#777" stroke-width="0.9"/><line x1="1" y1="12.5" x2="11" y2="12.5" stroke="#f2f2f2" stroke-width="1"/><line x1="1" y1="13.6" x2="11" y2="13.6" stroke="#9a9a9a" stroke-width="0.8"/><path d="M4.0 10.5 L6.0 6.0" stroke="#222" stroke-width="1"/><path d="M6.0 6.0 L8.2 10.5" stroke="#eee" stroke-width="0.9"/><path d="M3.5 15.8 H8.5 M3.8 16.0 L6.0 20.0" stroke="#333" stroke-width="0.9" fill="none"/></svg>
<div class="t" style="left:1589.70px;top:246.98px;font-size:12.5px;color:#000;transform:scaleX(0.9200);transform-origin:0 0;">0</div>
<div class="t" style="left:1550.00px;top:273.18px;font-size:12.5px;color:#000;transform:scaleX(0.9200);transform-origin:0 0;">Top</div>
<div style="position:absolute;left:1585px;top:266px"><div style="border:1px solid;border-color:#e2e2e2 #fefefe #fefefe #e2e2e2"><div style="border:1px solid;border-color:#d4d4d4 #ffffff #ffffff #d4d4d4"><div style="border:1px solid;border-color:#c8c8c8 #ffffff #ffffff #c8c8c8"><div style="border:1px solid;border-color:#c0c0c0 #f8f8f8 #f8f8f8 #c0c0c0"><div style="width:45.00px;height:16.00px;background:#fcfcfc"></div></div></div></div></div></div>
<svg width="12" height="26" viewBox="0 0 12 26" style="position:absolute;left:1572.8px;top:266px"><defs><linearGradient id="sg" x1="0" y1="0" x2="1" y2="1"><stop offset="0" stop-color="#e6e6e6"/><stop offset="0.5" stop-color="#c4c4c4"/><stop offset="1" stop-color="#9c9c9c"/></linearGradient></defs><ellipse cx="6.0" cy="13.0" rx="5.5" ry="12.5" fill="url(#sg)" stroke="#777" stroke-width="0.9"/><line x1="1" y1="12.5" x2="11" y2="12.5" stroke="#f2f2f2" stroke-width="1"/><line x1="1" y1="13.6" x2="11" y2="13.6" stroke="#9a9a9a" stroke-width="0.8"/><path d="M4.0 10.5 L6.0 6.0" stroke="#222" stroke-width="1"/><path d="M6.0 6.0 L8.2 10.5" stroke="#eee" stroke-width="0.9"/><path d="M3.5 15.8 H8.5 M3.8 16.0 L6.0 20.0" stroke="#333" stroke-width="0.9" fill="none"/></svg>
<div class="t" style="left:1589.70px;top:273.18px;font-size:12.5px;color:#000;transform:scaleX(0.9200);transform-origin:0 0;">0</div>
<div class="t" style="left:1545.50px;top:296.78px;font-size:12.5px;color:#000;transform:scaleX(0.9765);transform-origin:0 0;">colour</div>
<div style="position:absolute;left:1544px;top:312px"><div style="border:1px solid;border-color:#d4d4d4 #ffffff #ffffff #d4d4d4"><div style="border:1px solid;border-color:#c8c8c8 #ffffff #ffffff #c8c8c8"><div style="border:1px solid;border-color:#c0c0c0 #f8f8f8 #f8f8f8 #c0c0c0"><div style="width:26.00px;height:24.00px;background:#000"></div></div></div></div></div>
<div class="t" style="left:879.30px;top:363.68px;font-size:12.5px;color:#000;transform:scaleX(0.9000);transform-origin:0 0;">Visible Pages</div>
<svg width="14" height="27.4" viewBox="0 0 14 27.4" style="position:absolute;left:837px;top:378.2px"><defs><linearGradient id="sg" x1="0" y1="0" x2="1" y2="1"><stop offset="0" stop-color="#e6e6e6"/><stop offset="0.5" stop-color="#c4c4c4"/><stop offset="1" stop-color="#9c9c9c"/></linearGradient></defs><ellipse cx="7.0" cy="13.7" rx="6.5" ry="13.2" fill="url(#sg)" stroke="#777" stroke-width="0.9"/><line x1="1" y1="13.2" x2="13" y2="13.2" stroke="#f2f2f2" stroke-width="1"/><line x1="1" y1="14.299999999999999" x2="13" y2="14.299999999999999" stroke="#9a9a9a" stroke-width="0.8"/><path d="M5.0 11.2 L7.0 6.699999999999999" stroke="#222" stroke-width="1"/><path d="M7.0 6.699999999999999 L9.2 11.2" stroke="#eee" stroke-width="0.9"/><path d="M4.5 16.5 H9.5 M4.8 16.7 L7.0 20.7" stroke="#333" stroke-width="0.9" fill="none"/></svg>
<div style="position:absolute;left:851px;top:382px"><div style="border:1px solid;border-color:#e2e2e2 #fefefe #fefefe #e2e2e2"><div style="border:1px solid;border-color:#d4d4d4 #ffffff #ffffff #d4d4d4"><div style="border:1px solid;border-color:#c8c8c8 #ffffff #ffffff #c8c8c8"><div style="border:1px solid;border-color:#c0c0c0 #f8f8f8 #f8f8f8 #c0c0c0"><div style="width:19.00px;height:16.00px;background:#fcfcfc"></div></div></div></div></div></div>
<div class="t" style="left:856.00px;top:387.18px;font-size:12.5px;color:#000;transform:scaleX(0.9200);transform-origin:0 0;">0</div>
<div style="position:absolute;left:878px;top:382px"><div style="border:1px solid;border-color:#e2e2e2 #fefefe #fefefe #e2e2e2"><div style="border:1px solid;border-color:#d4d4d4 #ffffff #ffffff #d4d4d4"><div style="border:1px solid;border-color:#c8c8c8 #ffffff #ffffff #c8c8c8"><div style="border:1px solid;border-color:#c0c0c0 #f8f8f8 #f8f8f8 #c0c0c0"><div style="width:123.00px;height:230.00px;background:transparent"></div></div></div></div></div></div>
<div style="position:absolute;left:882px;top:386px"><div style="border:1px solid;border-color:#e2e2e2 #fefefe #fefefe #e2e2e2"><div style="border:1px solid;border-color:#d4d4d4 #ffffff #ffffff #d4d4d4"><div style="border:1px solid;border-color:#c8c8c8 #ffffff #ffffff #c8c8c8"><div style="border:1px solid;border-color:#c0c0c0 #f8f8f8 #f8f8f8 #c0c0c0"><div style="width:115.00px;height:25.00px;background:#f0f0f0"></div></div></div></div></div></div>
<div style="position:absolute;left:886px;top:390px;width:100px;height:24px;box-sizing:border-box;border:1px solid #a4a4a4;background:#fff"></div>
<div class="t" style="left:889.71px;top:394.18px;font-size:12.5px;color:#000;transform:scaleX(0.8868);transform-origin:0 0;">Page 1</div>
<div style="position:absolute;left:988px;top:393.5px;width:13px;height:13px;background:#0a5bc4;border-radius:3px;"><svg width="13" height="13" viewBox="0 0 13 13" style="position:absolute;left:0;top:0"><path d="M3.3 6.7 L5.4 8.8 L9.8 4.2" fill="none" stroke="#fff" stroke-width="1.1"/></svg></div>
<div style="position:absolute;left:882px;top:419px"><div style="border:1px solid;border-color:#e2e2e2 #fefefe #fefefe #e2e2e2"><div style="border:1px solid;border-color:#d4d4d4 #ffffff #ffffff #d4d4d4"><div style="border:1px solid;border-color:#c8c8c8 #ffffff #ffffff #c8c8c8"><div style="border:1px solid;border-color:#c0c0c0 #f8f8f8 #f8f8f8 #c0c0c0"><div style="width:115.00px;height:25.00px;background:#f0f0f0"></div></div></div></div></div></div>
<div style="position:absolute;left:886px;top:423px;width:100px;height:24px;box-sizing:border-box;border:1px solid #a4a4a4;background:#fff"></div>
<div class="t" style="left:889.71px;top:427.18px;font-size:12.5px;color:#000;transform:scaleX(0.8868);transform-origin:0 0;">Page 2</div>
<div style="position:absolute;left:988px;top:426.5px;width:13px;height:13px;background:#0a5bc4;border-radius:3px;"><svg width="13" height="13" viewBox="0 0 13 13" style="position:absolute;left:0;top:0"><path d="M3.3 6.7 L5.4 8.8 L9.8 4.2" fill="none" stroke="#fff" stroke-width="1.1"/></svg></div>
<div style="position:absolute;left:882px;top:452px"><div style="border:1px solid;border-color:#e2e2e2 #fefefe #fefefe #e2e2e2"><div style="border:1px solid;border-color:#d4d4d4 #ffffff #ffffff #d4d4d4"><div style="border:1px solid;border-color:#c8c8c8 #ffffff #ffffff #c8c8c8"><div style="border:1px solid;border-color:#c0c0c0 #f8f8f8 #f8f8f8 #c0c0c0"><div style="width:115.00px;height:25.00px;background:#f0f0f0"></div></div></div></div></div></div>
<div style="position:absolute;left:886px;top:456px;width:100px;height:24px;box-sizing:border-box;border:1px solid #a4a4a4;background:#fff"></div>
<div class="t" style="left:889.71px;top:460.18px;font-size:12.5px;color:#000;transform:scaleX(0.8868);transform-origin:0 0;">Page 3</div>
<div style="position:absolute;left:988px;top:459.5px;width:13px;height:13px;background:#0a5bc4;border-radius:3px;"><svg width="13" height="13" viewBox="0 0 13 13" style="position:absolute;left:0;top:0"><path d="M3.3 6.7 L5.4 8.8 L9.8 4.2" fill="none" stroke="#fff" stroke-width="1.1"/></svg></div>
<div style="position:absolute;left:882px;top:485px"><div style="border:1px solid;border-color:#e2e2e2 #fefefe #fefefe #e2e2e2"><div style="border:1px solid;border-color:#d4d4d4 #ffffff #ffffff #d4d4d4"><div style="border:1px solid;border-color:#c8c8c8 #ffffff #ffffff #c8c8c8"><div style="border:1px solid;border-color:#c0c0c0 #f8f8f8 #f8f8f8 #c0c0c0"><div style="width:115.00px;height:25.00px;background:#f0f0f0"></div></div></div></div></div></div>
<div style="position:absolute;left:886px;top:489px;width:100px;height:24px;box-sizing:border-box;border:1px solid #cacaca;background:#f4f4f4"></div>
<div style="position:absolute;left:988px;top:492px;width:11px;height:11px;border:1px solid #b4b4b4;border-radius:3px;background:#f6f6f6"></div>
<div style="position:absolute;left:882px;top:518px"><div style="border:1px solid;border-color:#e2e2e2 #fefefe #fefefe #e2e2e2"><div style="border:1px solid;border-color:#d4d4d4 #ffffff #ffffff #d4d4d4"><div style="border:1px solid;border-color:#c8c8c8 #ffffff #ffffff #c8c8c8"><div style="border:1px solid;border-color:#c0c0c0 #f8f8f8 #f8f8f8 #c0c0c0"><div style="width:115.00px;height:25.00px;background:#f0f0f0"></div></div></div></div></div></div>
<div style="position:absolute;left:886px;top:522px;width:100px;height:24px;box-sizing:border-box;border:1px solid #cacaca;background:#f4f4f4"></div>
<div style="position:absolute;left:988px;top:525px;width:11px;height:11px;border:1px solid #b4b4b4;border-radius:3px;background:#f6f6f6"></div>
<div style="position:absolute;left:882px;top:551px"><div style="border:1px solid;border-color:#e2e2e2 #fefefe #fefefe #e2e2e2"><div style="border:1px solid;border-color:#d4d4d4 #ffffff #ffffff #d4d4d4"><div style="border:1px solid;border-color:#c8c8c8 #ffffff #ffffff #c8c8c8"><div style="border:1px solid;border-color:#c0c0c0 #f8f8f8 #f8f8f8 #c0c0c0"><div style="width:115.00px;height:25.00px;background:#f0f0f0"></div></div></div></div></div></div>
<div style="position:absolute;left:886px;top:555px;width:100px;height:24px;box-sizing:border-box;border:1px solid #cacaca;background:#f4f4f4"></div>
<div style="position:absolute;left:988px;top:558px;width:11px;height:11px;border:1px solid #b4b4b4;border-radius:3px;background:#f6f6f6"></div>
<div style="position:absolute;left:882px;top:584px"><div style="border:1px solid;border-color:#e2e2e2 #fefefe #fefefe #e2e2e2"><div style="border:1px solid;border-color:#d4d4d4 #ffffff #ffffff #d4d4d4"><div style="border:1px solid;border-color:#c8c8c8 #ffffff #ffffff #c8c8c8"><div style="border:1px solid;border-color:#c0c0c0 #f8f8f8 #f8f8f8 #c0c0c0"><div style="width:115.00px;height:25.00px;background:#f0f0f0"></div></div></div></div></div></div>
<div style="position:absolute;left:886px;top:588px;width:100px;height:24px;box-sizing:border-box;border:1px solid #cacaca;background:#f4f4f4"></div>
<div style="position:absolute;left:988px;top:591px;width:11px;height:11px;border:1px solid #b4b4b4;border-radius:3px;background:#f6f6f6"></div>
<div class="t" style="left:1068.69px;top:366.18px;font-size:12.5px;color:#000;transform:scaleX(0.9119);transform-origin:0 0;">Pages:Titles</div>
<svg width="14" height="27.7" viewBox="0 0 14 27.7" style="position:absolute;left:1027px;top:377px"><defs><linearGradient id="sg" x1="0" y1="0" x2="1" y2="1"><stop offset="0" stop-color="#e6e6e6"/><stop offset="0.5" stop-color="#c4c4c4"/><stop offset="1" stop-color="#9c9c9c"/></linearGradient></defs><ellipse cx="7.0" cy="13.85" rx="6.5" ry="13.35" fill="url(#sg)" stroke="#777" stroke-width="0.9"/><line x1="1" y1="13.35" x2="13" y2="13.35" stroke="#f2f2f2" stroke-width="1"/><line x1="1" y1="14.45" x2="13" y2="14.45" stroke="#9a9a9a" stroke-width="0.8"/><path d="M5.0 11.35 L7.0 6.85" stroke="#222" stroke-width="1"/><path d="M7.0 6.85 L9.2 11.35" stroke="#eee" stroke-width="0.9"/><path d="M4.5 16.65 H9.5 M4.8 16.85 L7.0 20.85" stroke="#333" stroke-width="0.9" fill="none"/></svg>
<div style="position:absolute;left:1041px;top:381px"><div style="border:1px solid;border-color:#e2e2e2 #fefefe #fefefe #e2e2e2"><div style="border:1px solid;border-color:#d4d4d4 #ffffff #ffffff #d4d4d4"><div style="border:1px solid;border-color:#c8c8c8 #ffffff #ffffff #c8c8c8"><div style="border:1px solid;border-color:#c0c0c0 #f8f8f8 #f8f8f8 #c0c0c0"><div style="width:19.00px;height:16.00px;background:#fcfcfc"></div></div></div></div></div></div>
<div class="t" style="left:1046.00px;top:386.48px;font-size:12.5px;color:#000;transform:scaleX(0.9200);transform-origin:0 0;">0</div>
<div style="position:absolute;left:1068px;top:381px"><div style="border:1px solid;border-color:#e2e2e2 #fefefe #fefefe #e2e2e2"><div style="border:1px solid;border-color:#d4d4d4 #ffffff #ffffff #d4d4d4"><div style="border:1px solid;border-color:#c8c8c8 #ffffff #ffffff #c8c8c8"><div style="border:1px solid;border-color:#c0c0c0 #f8f8f8 #f8f8f8 #c0c0c0"><div style="width:100.00px;height:224.00px;background:transparent"></div></div></div></div></div></div>
<div style="position:absolute;left:1072px;top:384px"><div style="border:1px solid;border-color:#9a9a9a #a8a8a8 #a8a8a8 #9a9a9a"><div style="border:1px solid;border-color:#8e8e8e #acacac #acacac #8e8e8e"><div style="border:1px solid;border-color:#8a8a8a #b0b0b0 #b0b0b0 #8a8a8a"><div style="border:1px solid;border-color:#8c8c8c #b8b8b8 #b8b8b8 #8c8c8c"><div style="width:92.00px;height:17.00px;background:#d6d6d6"></div></div></div></div></div></div>
<div class="t" style="left:1077.72px;top:390.88px;font-size:12.5px;color:#000;transform:scaleX(0.8816);transform-origin:0 0;">Page 1</div>
<div style="position:absolute;left:1072px;top:409px"><div style="border:1px solid;border-color:#9a9a9a #a8a8a8 #a8a8a8 #9a9a9a"><div style="border:1px solid;border-color:#8e8e8e #acacac #acacac #8e8e8e"><div style="border:1px solid;border-color:#8a8a8a #b0b0b0 #b0b0b0 #8a8a8a"><div style="border:1px solid;border-color:#8c8c8c #b8b8b8 #b8b8b8 #8c8c8c"><div style="width:92.00px;height:17.00px;background:#d6d6d6"></div></div></div></div></div></div>
<div class="t" style="left:1077.72px;top:415.88px;font-size:12.5px;color:#000;transform:scaleX(0.8816);transform-origin:0 0;">Page 2</div>
<div style="position:absolute;left:1072px;top:434px"><div style="border:1px solid;border-color:#9a9a9a #a8a8a8 #a8a8a8 #9a9a9a"><div style="border:1px solid;border-color:#8e8e8e #acacac #acacac #8e8e8e"><div style="border:1px solid;border-color:#8a8a8a #b0b0b0 #b0b0b0 #8a8a8a"><div style="border:1px solid;border-color:#8c8c8c #b8b8b8 #b8b8b8 #8c8c8c"><div style="width:92.00px;height:17.00px;background:#d6d6d6"></div></div></div></div></div></div>
<div class="t" style="left:1077.72px;top:440.88px;font-size:12.5px;color:#000;transform:scaleX(0.8816);transform-origin:0 0;">Page 3</div>
<div style="position:absolute;left:1072px;top:459px"><div style="border:1px solid;border-color:#cfcfcf #d0d0d0 #d0d0d0 #cfcfcf"><div style="border:1px solid;border-color:#c8c8c8 #d4d4d4 #d4d4d4 #c8c8c8"><div style="border:1px solid;border-color:#c4c4c4 #d8d8d8 #d8d8d8 #c4c4c4"><div style="border:1px solid;border-color:#c6c6c6 #dcdcdc #dcdcdc #c6c6c6"><div style="width:92.00px;height:17.00px;background:#e4e4e4"></div></div></div></div></div></div>
<div style="position:absolute;left:1072px;top:484px"><div style="border:1px solid;border-color:#cfcfcf #d0d0d0 #d0d0d0 #cfcfcf"><div style="border:1px solid;border-color:#c8c8c8 #d4d4d4 #d4d4d4 #c8c8c8"><div style="border:1px solid;border-color:#c4c4c4 #d8d8d8 #d8d8d8 #c4c4c4"><div style="border:1px solid;border-color:#c6c6c6 #dcdcdc #dcdcdc #c6c6c6"><div style="width:92.00px;height:17.00px;background:#e4e4e4"></div></div></div></div></div></div>
<div style="position:absolute;left:1072px;top:509px"><div style="border:1px solid;border-color:#cfcfcf #d0d0d0 #d0d0d0 #cfcfcf"><div style="border:1px solid;border-color:#c8c8c8 #d4d4d4 #d4d4d4 #c8c8c8"><div style="border:1px solid;border-color:#c4c4c4 #d8d8d8 #d8d8d8 #c4c4c4"><div style="border:1px solid;border-color:#c6c6c6 #dcdcdc #dcdcdc #c6c6c6"><div style="width:92.00px;height:17.00px;background:#e4e4e4"></div></div></div></div></div></div>
<div style="position:absolute;left:1072px;top:534px"><div style="border:1px solid;border-color:#cfcfcf #d0d0d0 #d0d0d0 #cfcfcf"><div style="border:1px solid;border-color:#c8c8c8 #d4d4d4 #d4d4d4 #c8c8c8"><div style="border:1px solid;border-color:#c4c4c4 #d8d8d8 #d8d8d8 #c4c4c4"><div style="border:1px solid;border-color:#c6c6c6 #dcdcdc #dcdcdc #c6c6c6"><div style="width:92.00px;height:17.00px;background:#e4e4e4"></div></div></div></div></div></div>
<div style="position:absolute;left:1072px;top:559px"><div style="border:1px solid;border-color:#cfcfcf #d0d0d0 #d0d0d0 #cfcfcf"><div style="border:1px solid;border-color:#c8c8c8 #d4d4d4 #d4d4d4 #c8c8c8"><div style="border:1px solid;border-color:#c4c4c4 #d8d8d8 #d8d8d8 #c4c4c4"><div style="border:1px solid;border-color:#c6c6c6 #dcdcdc #dcdcdc #c6c6c6"><div style="width:92.00px;height:17.00px;background:#e4e4e4"></div></div></div></div></div></div>
<div style="position:absolute;left:1072px;top:584px"><div style="border:1px solid;border-color:#cfcfcf #d0d0d0 #d0d0d0 #cfcfcf"><div style="border:1px solid;border-color:#c8c8c8 #d4d4d4 #d4d4d4 #c8c8c8"><div style="border:1px solid;border-color:#c4c4c4 #d8d8d8 #d8d8d8 #c4c4c4"><div style="border:1px solid;border-color:#c6c6c6 #dcdcdc #dcdcdc #c6c6c6"><div style="width:92.00px;height:17.00px;background:#e4e4e4"></div></div></div></div></div></div>
<div class="t" style="left:1198.00px;top:366.78px;font-size:12.5px;color:#000;transform:scaleX(0.9500);transform-origin:0 0;">Tab Image</div>
<div style="position:absolute;left:1197px;top:384px;width:128px;height:21px;box-sizing:border-box;background:linear-gradient(#d4d4d4,#b4b4b4);border:1px solid;border-color:#e0e0e0 #7a7a7a #7a7a7a #e0e0e0;box-shadow:inset -2px -2px 0 #a0a0a0"></div>
<div class="t" style="left:1206.00px;top:388.57px;font-size:12.5px;color:#000;transform:scaleX(0.9000);transform-origin:0 0;">tab120x40_1.png</div>
<svg width="16" height="12" style="position:absolute;left:1303px;top:391px"><path d="M1 1.5 L14.5 1.5 L7.75 10 Z" fill="none" stroke="#6a6a6a" stroke-width="1"/></svg>
<div class="t" style="left:1336.23px;top:377.18px;font-size:12.5px;color:#000;transform:scaleX(0.9654);transform-origin:0 0;">Splitter Colour</div>
<div style="position:absolute;left:1336px;top:391px"><div style="border:1px solid;border-color:#e2e2e2 #fefefe #fefefe #e2e2e2"><div style="border:1px solid;border-color:#d4d4d4 #ffffff #ffffff #d4d4d4"><div style="border:1px solid;border-color:#c8c8c8 #ffffff #ffffff #c8c8c8"><div style="border:1px solid;border-color:#c0c0c0 #f8f8f8 #f8f8f8 #c0c0c0"><div style="width:24.00px;height:24.00px;background:#fff"></div></div></div></div></div></div>
<div style="position:absolute;left:1343px;top:398px;width:19px;height:1px;background:#000"></div>
<div style="position:absolute;left:1352px;top:398px;width:1px;height:19px;background:#000"></div>
<div class="t" style="left:1212.05px;top:425.68px;font-size:12.5px;color:#000;transform:scaleX(0.9521);transform-origin:0 0;">Stop VI On Transition</div>
<svg width="52.5" height="23" style="position:absolute;left:1212.6px;top:448px"><defs><linearGradient id="tg243" x1="0" y1="0" x2="0" y2="1"><stop offset="0" stop-color="#ececec"/><stop offset="0.35" stop-color="#c8c8c8"/><stop offset="1" stop-color="#b4b4b4"/></linearGradient></defs><ellipse cx="25.75" cy="11.0" rx="24.25" ry="9.5" fill="#bdbdbd" opacity="0.6"/><ellipse cx="24.25" cy="9.5" rx="23.75" ry="9.0" fill="url(#tg243)" stroke="#3a3a3a" stroke-width="1"/><path d="M31.04 5.32 L42.195 9.5 L31.04 13.68 Z" fill="#285618" stroke="#285618" stroke-width="2" stroke-linejoin="round"/></svg>
<div class="t" style="left:1211.27px;top:473.98px;font-size:12.5px;color:#000;transform:scaleX(0.9348);transform-origin:0 0;">Rename</div>
<svg width="52.5" height="22.5" style="position:absolute;left:1211.6px;top:496px"><defs><linearGradient id="tg245" x1="0" y1="0" x2="0" y2="1"><stop offset="0" stop-color="#ececec"/><stop offset="0.35" stop-color="#c8c8c8"/><stop offset="1" stop-color="#b4b4b4"/></linearGradient></defs><ellipse cx="25.75" cy="10.75" rx="24.25" ry="9.25" fill="#bdbdbd" opacity="0.6"/><ellipse cx="24.25" cy="9.25" rx="23.75" ry="8.75" fill="url(#tg245)" stroke="#3a3a3a" stroke-width="1"/><path d="M31.04 5.180000000000001 L42.195 9.25 L31.04 13.32 Z" fill="#285618" stroke="#285618" stroke-width="2" stroke-linejoin="round"/></svg>
<div class="t" style="left:1214.80px;top:525.57px;font-size:12.5px;color:#000;transform:scaleX(0.9192);transform-origin:0 0;">Transparent Page</div>
<svg width="52" height="22.5" style="position:absolute;left:1213.7px;top:548px"><defs><linearGradient id="tg247" x1="0" y1="0" x2="0" y2="1"><stop offset="0" stop-color="#ececec"/><stop offset="0.35" stop-color="#c8c8c8"/><stop offset="1" stop-color="#b4b4b4"/></linearGradient></defs><ellipse cx="25.5" cy="10.75" rx="24.0" ry="9.25" fill="#bdbdbd" opacity="0.6"/><ellipse cx="24.0" cy="9.25" rx="23.5" ry="8.75" fill="url(#tg247)" stroke="#3a3a3a" stroke-width="1"/><path d="M30.72 5.180000000000001 L41.76 9.25 L30.72 13.32 Z" fill="#285618" stroke="#285618" stroke-width="2" stroke-linejoin="round"/></svg>
<div style="position:absolute;left:1215.3px;top:585.3px;width:112.3px;height:20.3px;box-sizing:border-box;background:#fdfdfd;border:1px solid #c8c8c8;border-bottom-color:#a8a8a8;border-radius:4px"></div>
<div class="t" style="left:470.80px;width:1600px;text-align:center;top:589.67px;font-size:12.5px;color:#000;transform:scaleX(0.9239);transform-origin:50% 0;">Delete Current Page</div>
<div style="position:absolute;left:1339.4px;top:585.3px;width:112.3px;height:20.3px;box-sizing:border-box;background:#fdfdfd;border:1px solid #c8c8c8;border-bottom-color:#a8a8a8;border-radius:4px"></div>
<div class="t" style="left:595.40px;width:1600px;text-align:center;top:589.67px;font-size:12.5px;color:#000;transform:scaleX(0.9039);transform-origin:50% 0;">Reload Pages</div>
<div style="position:absolute;left:930.5px;top:647.3px;width:72px;height:20.2px;box-sizing:border-box;background:#fdfdfd;border:1px solid #c8c8c8;border-bottom-color:#a8a8a8;border-radius:4px"></div>
<div class="t" style="left:166.00px;width:1600px;text-align:center;top:652.17px;font-size:12.5px;color:#000;transform:scaleX(0.9958);transform-origin:50% 0;">Stop</div>
<div class="t" style="left:1428.61px;top:369.88px;font-size:12.5px;color:#000;transform:scaleX(0.9905);transform-origin:0 0;">Content Margin</div>
<div style="position:absolute;left:1428px;top:385px"><div style="border:1px solid;border-color:#e2e2e2 #fefefe #fefefe #e2e2e2"><div style="border:1px solid;border-color:#d4d4d4 #ffffff #ffffff #d4d4d4"><div style="border:1px solid;border-color:#c8c8c8 #ffffff #ffffff #c8c8c8"><div style="border:1px solid;border-color:#c0c0c0 #f8f8f8 #f8f8f8 #c0c0c0"><div style="width:65.00px;height:167.00px;background:#b4b4b4"></div></div></div></div></div></div>
<div class="t" style="left:1443.49px;top:390.98px;font-size:12.5px;color:#000;transform:scaleX(1.0125);transform-origin:0 0;">left</div>
<div style="position:absolute;left:1444px;top:406px"><div style="border:1px solid;border-color:#a4a4a4 #c4c4c4 #c4c4c4 #a4a4a4"><div style="border:1px solid;border-color:#989898 #c8c8c8 #c8c8c8 #989898"><div style="border:1px solid;border-color:#8e8e8e #cccccc #cccccc #8e8e8e"><div style="border:1px solid;border-color:#888888 #d0d0d0 #d0d0d0 #888888"><div style="width:45.00px;height:15.00px;background:#fcfcfc"></div></div></div></div></div></div>
<svg width="11.5" height="25.3" viewBox="0 0 11.5 25.3" style="position:absolute;left:1432.4px;top:404.3px"><defs><linearGradient id="sg" x1="0" y1="0" x2="1" y2="1"><stop offset="0" stop-color="#e6e6e6"/><stop offset="0.5" stop-color="#c4c4c4"/><stop offset="1" stop-color="#9c9c9c"/></linearGradient></defs><ellipse cx="5.75" cy="12.65" rx="5.25" ry="12.15" fill="url(#sg)" stroke="#777" stroke-width="0.9"/><line x1="1" y1="12.15" x2="10.5" y2="12.15" stroke="#f2f2f2" stroke-width="1"/><line x1="1" y1="13.25" x2="10.5" y2="13.25" stroke="#9a9a9a" stroke-width="0.8"/><path d="M3.75 10.15 L5.75 5.65" stroke="#222" stroke-width="1"/><path d="M5.75 5.65 L7.95 10.15" stroke="#eee" stroke-width="0.9"/><path d="M3.25 15.45 H8.25 M3.55 15.65 L5.75 19.65" stroke="#333" stroke-width="0.9" fill="none"/></svg>
<div class="t" style="left:1449.50px;top:412.07px;font-size:12.5px;color:#000;transform:scaleX(0.9200);transform-origin:0 0;">12</div>
<div class="t" style="left:1444.50px;top:432.98px;font-size:12.5px;color:#000;transform:scaleX(0.9200);transform-origin:0 0;">top</div>
<div style="position:absolute;left:1444px;top:448px"><div style="border:1px solid;border-color:#a4a4a4 #c4c4c4 #c4c4c4 #a4a4a4"><div style="border:1px solid;border-color:#989898 #c8c8c8 #c8c8c8 #989898"><div style="border:1px solid;border-color:#8e8e8e #cccccc #cccccc #8e8e8e"><div style="border:1px solid;border-color:#888888 #d0d0d0 #d0d0d0 #888888"><div style="width:45.00px;height:15.00px;background:#fcfcfc"></div></div></div></div></div></div>
<svg width="11.5" height="25.3" viewBox="0 0 11.5 25.3" style="position:absolute;left:1432.4px;top:446.3px"><defs><linearGradient id="sg" x1="0" y1="0" x2="1" y2="1"><stop offset="0" stop-color="#e6e6e6"/><stop offset="0.5" stop-color="#c4c4c4"/><stop offset="1" stop-color="#9c9c9c"/></linearGradient></defs><ellipse cx="5.75" cy="12.65" rx="5.25" ry="12.15" fill="url(#sg)" stroke="#777" stroke-width="0.9"/><line x1="1" y1="12.15" x2="10.5" y2="12.15" stroke="#f2f2f2" stroke-width="1"/><line x1="1" y1="13.25" x2="10.5" y2="13.25" stroke="#9a9a9a" stroke-width="0.8"/><path d="M3.75 10.15 L5.75 5.65" stroke="#222" stroke-width="1"/><path d="M5.75 5.65 L7.95 10.15" stroke="#eee" stroke-width="0.9"/><path d="M3.25 15.45 H8.25 M3.55 15.65 L5.75 19.65" stroke="#333" stroke-width="0.9" fill="none"/></svg>
<div class="t" style="left:1449.50px;top:454.07px;font-size:12.5px;color:#000;transform:scaleX(0.9200);transform-origin:0 0;">7</div>
<div class="t" style="left:1444.50px;top:474.98px;font-size:12.5px;color:#000;transform:scaleX(0.9200);transform-origin:0 0;">right</div>
<div style="position:absolute;left:1444px;top:490px"><div style="border:1px solid;border-color:#a4a4a4 #c4c4c4 #c4c4c4 #a4a4a4"><div style="border:1px solid;border-color:#989898 #c8c8c8 #c8c8c8 #989898"><div style="border:1px solid;border-color:#8e8e8e #cccccc #cccccc #8e8e8e"><div style="border:1px solid;border-color:#888888 #d0d0d0 #d0d0d0 #888888"><div style="width:45.00px;height:15.00px;background:#fcfcfc"></div></div></div></div></div></div>
<svg width="11.5" height="25.3" viewBox="0 0 11.5 25.3" style="position:absolute;left:1432.4px;top:488.3px"><defs><linearGradient id="sg" x1="0" y1="0" x2="1" y2="1"><stop offset="0" stop-color="#e6e6e6"/><stop offset="0.5" stop-color="#c4c4c4"/><stop offset="1" stop-color="#9c9c9c"/></linearGradient></defs><ellipse cx="5.75" cy="12.65" rx="5.25" ry="12.15" fill="url(#sg)" stroke="#777" stroke-width="0.9"/><line x1="1" y1="12.15" x2="10.5" y2="12.15" stroke="#f2f2f2" stroke-width="1"/><line x1="1" y1="13.25" x2="10.5" y2="13.25" stroke="#9a9a9a" stroke-width="0.8"/><path d="M3.75 10.15 L5.75 5.65" stroke="#222" stroke-width="1"/><path d="M5.75 5.65 L7.95 10.15" stroke="#eee" stroke-width="0.9"/><path d="M3.25 15.45 H8.25 M3.55 15.65 L5.75 19.65" stroke="#333" stroke-width="0.9" fill="none"/></svg>
<div class="t" style="left:1449.50px;top:496.07px;font-size:12.5px;color:#000;transform:scaleX(0.9200);transform-origin:0 0;">12</div>
<div class="t" style="left:1443.44px;top:516.97px;font-size:12.5px;color:#000;transform:scaleX(1.0649);transform-origin:0 0;">bottom</div>
<div style="position:absolute;left:1444px;top:532px"><div style="border:1px solid;border-color:#a4a4a4 #c4c4c4 #c4c4c4 #a4a4a4"><div style="border:1px solid;border-color:#989898 #c8c8c8 #c8c8c8 #989898"><div style="border:1px solid;border-color:#8e8e8e #cccccc #cccccc #8e8e8e"><div style="border:1px solid;border-color:#888888 #d0d0d0 #d0d0d0 #888888"><div style="width:45.00px;height:15.00px;background:#fcfcfc"></div></div></div></div></div></div>
<svg width="11.5" height="25.3" viewBox="0 0 11.5 25.3" style="position:absolute;left:1432.4px;top:530.3px"><defs><linearGradient id="sg" x1="0" y1="0" x2="1" y2="1"><stop offset="0" stop-color="#e6e6e6"/><stop offset="0.5" stop-color="#c4c4c4"/><stop offset="1" stop-color="#9c9c9c"/></linearGradient></defs><ellipse cx="5.75" cy="12.65" rx="5.25" ry="12.15" fill="url(#sg)" stroke="#777" stroke-width="0.9"/><line x1="1" y1="12.15" x2="10.5" y2="12.15" stroke="#f2f2f2" stroke-width="1"/><line x1="1" y1="13.25" x2="10.5" y2="13.25" stroke="#9a9a9a" stroke-width="0.8"/><path d="M3.75 10.15 L5.75 5.65" stroke="#222" stroke-width="1"/><path d="M5.75 5.65 L7.95 10.15" stroke="#eee" stroke-width="0.9"/><path d="M3.25 15.45 H8.25 M3.55 15.65 L5.75 19.65" stroke="#333" stroke-width="0.9" fill="none"/></svg>
<div class="t" style="left:1449.50px;top:538.07px;font-size:12.5px;color:#000;transform:scaleX(0.9200);transform-origin:0 0;">2</div>
<div class="t" style="left:1548.36px;top:381.07px;font-size:12.5px;color:#000;transform:scaleX(0.9377);transform-origin:0 0;">Icons:Visible</div>
<svg width="52.5" height="23.3" style="position:absolute;left:1548.5px;top:402.5px"><defs><linearGradient id="tg273" x1="0" y1="0" x2="0" y2="1"><stop offset="0" stop-color="#b8b8b8"/><stop offset="0.5" stop-color="#8c8c8c"/><stop offset="1" stop-color="#5a5a5a"/></linearGradient></defs><ellipse cx="25.75" cy="11.15" rx="24.25" ry="9.65" fill="#bdbdbd" opacity="0.6"/><ellipse cx="24.25" cy="9.65" rx="23.75" ry="9.15" fill="url(#tg273)" stroke="#3a3a3a" stroke-width="1"/><path d="M31.04 5.404000000000001 L42.195 9.65 L31.04 13.896 Z" fill="#3ee01e" stroke="#3ee01e" stroke-width="2" stroke-linejoin="round"/></svg>
<div class="t" style="left:1567.00px;top:432.88px;font-size:12.5px;color:#000;transform:scaleX(0.9491);transform-origin:0 0;">Tab:Image:Position</div>
<div style="position:absolute;left:1565px;top:448px"><div style="border:1px solid;border-color:#d4d4d4 #ffffff #ffffff #d4d4d4"><div style="border:1px solid;border-color:#c8c8c8 #ffffff #ffffff #c8c8c8"><div style="border:1px solid;border-color:#c0c0c0 #f8f8f8 #f8f8f8 #c0c0c0"><div style="width:67.00px;height:18.00px;background:#fcfcfc"></div></div></div></div></div>
<svg width="11.5" height="23.5" viewBox="0 0 11.5 23.5" style="position:absolute;left:1554.2px;top:446.6px"><defs><linearGradient id="sg" x1="0" y1="0" x2="1" y2="1"><stop offset="0" stop-color="#e6e6e6"/><stop offset="0.5" stop-color="#c4c4c4"/><stop offset="1" stop-color="#9c9c9c"/></linearGradient></defs><ellipse cx="5.75" cy="11.75" rx="5.25" ry="11.25" fill="url(#sg)" stroke="#777" stroke-width="0.9"/><line x1="1" y1="11.25" x2="10.5" y2="11.25" stroke="#f2f2f2" stroke-width="1"/><line x1="1" y1="12.35" x2="10.5" y2="12.35" stroke="#9a9a9a" stroke-width="0.8"/><path d="M3.75 9.25 L5.75 4.75" stroke="#222" stroke-width="1"/><path d="M5.75 4.75 L7.95 9.25" stroke="#eee" stroke-width="0.9"/><path d="M3.25 14.55 H8.25 M3.55 14.75 L5.75 18.75" stroke="#333" stroke-width="0.9" fill="none"/></svg>
<div class="t" style="left:1570.75px;top:453.78px;font-size:12.5px;color:#000;transform:scaleX(0.9500);transform-origin:0 0;">Left</div>
</body></html>
